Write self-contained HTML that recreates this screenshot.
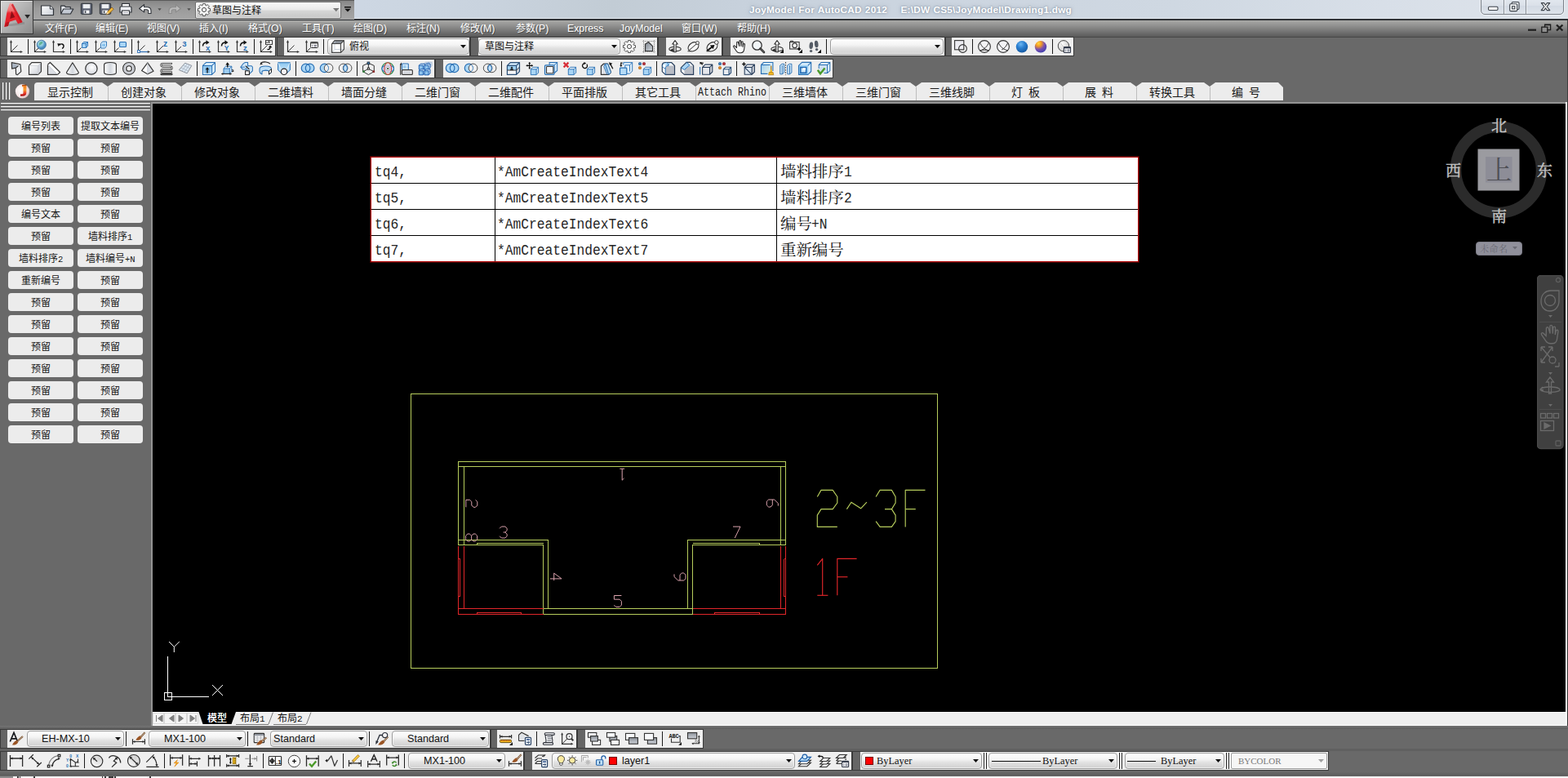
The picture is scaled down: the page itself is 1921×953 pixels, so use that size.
<!DOCTYPE html>
<html lang="zh"><head><meta charset="utf-8"><title>JoyModel For AutoCAD 2012</title>
<style>
html,body{margin:0;padding:0;background:#696969;}
body{width:1921px;height:953px;overflow:hidden;font-family:"Liberation Sans",sans-serif;}
#app{position:relative;width:1921px;height:953px;overflow:hidden;background:#696969;}
#app div,#app svg.t,#app svg.a,#app span{position:absolute;box-sizing:border-box;}
svg.t{overflow:visible;pointer-events:none}
span.h{color:transparent;white-space:nowrap;overflow:hidden;line-height:1.2;height:1.2em;user-select:none}
svg.ic{position:absolute;overflow:visible}
.cs{font-family:"Liberation Sans","Noto Sans CJK SC",sans-serif}
.cr{font-family:"Liberation Serif","Noto Serif CJK SC",serif}
</style></head>
<body>
<div id="app">
<div style="left:0px;top:0px;width:1921px;height:23px;background:linear-gradient(100deg,#ccd6e2 0%,#cdd7e3 23%,#c9d3de 31%,#c2ccd5 39%,#c7d1dc 47%,#ccd5e0 60%,#cfd8e2 75%,#d8dfe8 88%,#dde3ea 100%)"></div>
<div style="left:0px;top:22px;width:1921px;height:1px;background:#e3e9f0"></div>
<div style="left:0px;top:23px;width:1921px;height:2px;background:#2f3236"></div>
<div style="left:41px;top:0px;width:393px;height:24px;background:linear-gradient(#878787,#9a9a9a 40%,#a6a6a6);border-top:1px solid #5a5a5a"></div>
<div style="left:0px;top:0px;width:41px;height:42px;background:#3a3a3a;z-index:5"></div>
<div style="left:1px;top:1px;width:39px;height:40px;background:linear-gradient(135deg,#d2d2d2 0%,#b4b4b4 45%,#8e8e8e 100%);border:1px solid #e4e4e4;border-right-color:#9a9a9a;border-bottom-color:#8a8a8a;z-index:5"></div>
<div style="left:918px;top:5.300px;width:420px;height:18px;font-size:11.800px;font-weight:bold;color:#fff;white-space:pre;text-shadow:0 0 2px rgba(110,125,145,.9),0 0 5px rgba(120,135,155,.55);letter-spacing:0.230px;word-spacing:0.600px">JoyModel For AutoCAD 2012    E:\DW CS5\JoyModel\Drawing1.dwg</div>
<div style="left:1814px;top:-4px;width:102px;height:22px;border:1px solid #7a8088;border-radius:0 0 5px 5px;background:linear-gradient(#e4e9f0,#dbe1e9 48%,#d3dae4 52%,#dde3ea);box-shadow:0 0 0 1px rgba(255,255,255,.55)"></div>
<div style="left:1842px;top:0px;width:1px;height:17px;background:#8a9098;box-shadow:1px 0 0 rgba(255,255,255,.5)"></div>
<div style="left:1869px;top:0px;width:1px;height:17px;background:#8a9098;box-shadow:1px 0 0 rgba(255,255,255,.5)"></div>
<svg class="a" style="left:1815px;top:0" width="100" height="18" viewBox="0 0 100 18"><rect x="8.500" y="8.200" width="11.500" height="4.300" rx="1.200" fill="#fff" stroke="#3c424a" stroke-width="1.100"/><rect x="37.200" y="2.500" width="8.800" height="9" rx="1.200" fill="#e9edf2" stroke="#3c424a" stroke-width="1.100"/><rect x="34.700" y="4.800" width="9" height="8.800" rx="1.200" fill="#f6f8fa" stroke="#3c424a" stroke-width="1.100"/><rect x="37.600" y="7.700" width="3.200" height="3.200" fill="none" stroke="#3c424a" stroke-width="1.100"/><path d="M73.300 3.600h3.300l1.900 2.700 1.900-2.700h3.300l-3.600 4.500 3.700 4.500h-3.400l-1.900-2.700-1.900 2.700h-3.400l3.700-4.500z" fill="#fff" stroke="#3c424a" stroke-width="1.100" stroke-linejoin="round"/></svg>
<div style="left:0px;top:25px;width:1921px;height:20px;background:linear-gradient(#a9a9a7 0%,#8f8f8e 35%,#6e6e6e 75%,#5a5a5a 100%)"></div>
<div style="left:0px;top:45px;width:1921px;height:1px;background:#474747"></div>
<svg class="t" style="left:54.60px;top:27.60px" width="42.7" height="16.8" ><text class="cs" x="1.00" y="12.00" font-size="12.00" fill="rgba(40,40,40,.55)">文件</text><text x="25.00" y="12.00" font-family="Liberation Sans" font-size="12.30" fill="rgba(40,40,40,.55)">(F)</text></svg>
<svg class="t" style="left:54.00px;top:27.00px" width="42.7" height="16.8" ><text class="cs" x="1.00" y="12.00" font-size="12.00" fill="#fff">文件</text><text x="25.00" y="12.00" font-family="Liberation Sans" font-size="12.30" fill="#fff">(F)</text></svg><span class="h" style="left:55.0px;top:27.0px;width:39.7px;font-size:12.0px">文件(F)</span>
<svg class="t" style="left:116.60px;top:27.60px" width="43.4" height="16.8" ><text class="cs" x="1.00" y="12.00" font-size="12.00" fill="rgba(40,40,40,.55)">编辑</text><text x="25.00" y="12.00" font-family="Liberation Sans" font-size="12.30" fill="rgba(40,40,40,.55)">(E)</text></svg>
<svg class="t" style="left:116.00px;top:27.00px" width="43.4" height="16.8" ><text class="cs" x="1.00" y="12.00" font-size="12.00" fill="#fff">编辑</text><text x="25.00" y="12.00" font-family="Liberation Sans" font-size="12.30" fill="#fff">(E)</text></svg><span class="h" style="left:117.0px;top:27.0px;width:40.4px;font-size:12.0px">编辑(E)</span>
<svg class="t" style="left:179.60px;top:27.60px" width="43.4" height="16.8" ><text class="cs" x="1.00" y="12.00" font-size="12.00" fill="rgba(40,40,40,.55)">视图</text><text x="25.00" y="12.00" font-family="Liberation Sans" font-size="12.30" fill="rgba(40,40,40,.55)">(V)</text></svg>
<svg class="t" style="left:179.00px;top:27.00px" width="43.4" height="16.8" ><text class="cs" x="1.00" y="12.00" font-size="12.00" fill="#fff">视图</text><text x="25.00" y="12.00" font-family="Liberation Sans" font-size="12.30" fill="#fff">(V)</text></svg><span class="h" style="left:180.0px;top:27.0px;width:40.4px;font-size:12.0px">视图(V)</span>
<svg class="t" style="left:243.60px;top:27.60px" width="38.6" height="16.8" ><text class="cs" x="1.00" y="12.00" font-size="12.00" fill="rgba(40,40,40,.55)">插入</text><text x="25.00" y="12.00" font-family="Liberation Sans" font-size="12.30" fill="rgba(40,40,40,.55)">(I)</text></svg>
<svg class="t" style="left:243.00px;top:27.00px" width="38.6" height="16.8" ><text class="cs" x="1.00" y="12.00" font-size="12.00" fill="#fff">插入</text><text x="25.00" y="12.00" font-family="Liberation Sans" font-size="12.30" fill="#fff">(I)</text></svg><span class="h" style="left:244.0px;top:27.0px;width:35.6px;font-size:12.0px">插入(I)</span>
<svg class="t" style="left:303.60px;top:27.60px" width="44.8" height="16.8" ><text class="cs" x="1.00" y="12.00" font-size="12.00" fill="rgba(40,40,40,.55)">格式</text><text x="25.00" y="12.00" font-family="Liberation Sans" font-size="12.30" fill="rgba(40,40,40,.55)">(O)</text></svg>
<svg class="t" style="left:303.00px;top:27.00px" width="44.8" height="16.8" ><text class="cs" x="1.00" y="12.00" font-size="12.00" fill="#fff">格式</text><text x="25.00" y="12.00" font-family="Liberation Sans" font-size="12.30" fill="#fff">(O)</text></svg><span class="h" style="left:304.0px;top:27.0px;width:41.8px;font-size:12.0px">格式(O)</span>
<svg class="t" style="left:369.60px;top:27.60px" width="42.7" height="16.8" ><text class="cs" x="1.00" y="12.00" font-size="12.00" fill="rgba(40,40,40,.55)">工具</text><text x="25.00" y="12.00" font-family="Liberation Sans" font-size="12.30" fill="rgba(40,40,40,.55)">(T)</text></svg>
<svg class="t" style="left:369.00px;top:27.00px" width="42.7" height="16.8" ><text class="cs" x="1.00" y="12.00" font-size="12.00" fill="#fff">工具</text><text x="25.00" y="12.00" font-family="Liberation Sans" font-size="12.30" fill="#fff">(T)</text></svg><span class="h" style="left:370.0px;top:27.0px;width:39.7px;font-size:12.0px">工具(T)</span>
<svg class="t" style="left:432.60px;top:27.60px" width="44.1" height="16.8" ><text class="cs" x="1.00" y="12.00" font-size="12.00" fill="rgba(40,40,40,.55)">绘图</text><text x="25.00" y="12.00" font-family="Liberation Sans" font-size="12.30" fill="rgba(40,40,40,.55)">(D)</text></svg>
<svg class="t" style="left:432.00px;top:27.00px" width="44.1" height="16.8" ><text class="cs" x="1.00" y="12.00" font-size="12.00" fill="#fff">绘图</text><text x="25.00" y="12.00" font-family="Liberation Sans" font-size="12.30" fill="#fff">(D)</text></svg><span class="h" style="left:433.0px;top:27.0px;width:41.1px;font-size:12.0px">绘图(D)</span>
<svg class="t" style="left:497.60px;top:27.60px" width="44.1" height="16.8" ><text class="cs" x="1.00" y="12.00" font-size="12.00" fill="rgba(40,40,40,.55)">标注</text><text x="25.00" y="12.00" font-family="Liberation Sans" font-size="12.30" fill="rgba(40,40,40,.55)">(N)</text></svg>
<svg class="t" style="left:497.00px;top:27.00px" width="44.1" height="16.8" ><text class="cs" x="1.00" y="12.00" font-size="12.00" fill="#fff">标注</text><text x="25.00" y="12.00" font-family="Liberation Sans" font-size="12.30" fill="#fff">(N)</text></svg><span class="h" style="left:498.0px;top:27.0px;width:41.1px;font-size:12.0px">标注(N)</span>
<svg class="t" style="left:563.60px;top:27.60px" width="45.4" height="16.8" ><text class="cs" x="1.00" y="12.00" font-size="12.00" fill="rgba(40,40,40,.55)">修改</text><text x="25.00" y="12.00" font-family="Liberation Sans" font-size="12.30" fill="rgba(40,40,40,.55)">(M)</text></svg>
<svg class="t" style="left:563.00px;top:27.00px" width="45.4" height="16.8" ><text class="cs" x="1.00" y="12.00" font-size="12.00" fill="#fff">修改</text><text x="25.00" y="12.00" font-family="Liberation Sans" font-size="12.30" fill="#fff">(M)</text></svg><span class="h" style="left:564.0px;top:27.0px;width:42.4px;font-size:12.0px">修改(M)</span>
<svg class="t" style="left:631.60px;top:27.60px" width="43.4" height="16.8" ><text class="cs" x="1.00" y="12.00" font-size="12.00" fill="rgba(40,40,40,.55)">参数</text><text x="25.00" y="12.00" font-family="Liberation Sans" font-size="12.30" fill="rgba(40,40,40,.55)">(P)</text></svg>
<svg class="t" style="left:631.00px;top:27.00px" width="43.4" height="16.8" ><text class="cs" x="1.00" y="12.00" font-size="12.00" fill="#fff">参数</text><text x="25.00" y="12.00" font-family="Liberation Sans" font-size="12.30" fill="#fff">(P)</text></svg><span class="h" style="left:632.0px;top:27.0px;width:40.4px;font-size:12.0px">参数(P)</span>
<svg class="t" style="left:694.60px;top:27.60px" width="47.4" height="16.8" ><text x="1.00" y="12.00" font-family="Liberation Sans" font-size="12.30" fill="rgba(40,40,40,.55)">Express</text></svg>
<svg class="t" style="left:694.00px;top:27.00px" width="47.4" height="16.8" ><text x="1.00" y="12.00" font-family="Liberation Sans" font-size="12.30" fill="#fff">Express</text></svg>
<svg class="t" style="left:758.60px;top:27.60px" width="55.6" height="16.8" ><text x="1.00" y="12.00" font-family="Liberation Sans" font-size="12.30" fill="rgba(40,40,40,.55)">JoyModel</text></svg>
<svg class="t" style="left:758.00px;top:27.00px" width="55.6" height="16.8" ><text x="1.00" y="12.00" font-family="Liberation Sans" font-size="12.30" fill="#fff">JoyModel</text></svg>
<svg class="t" style="left:834.60px;top:27.60px" width="46.8" height="16.8" ><text class="cs" x="1.00" y="12.00" font-size="12.00" fill="rgba(40,40,40,.55)">窗口</text><text x="25.00" y="12.00" font-family="Liberation Sans" font-size="12.30" fill="rgba(40,40,40,.55)">(W)</text></svg>
<svg class="t" style="left:834.00px;top:27.00px" width="46.8" height="16.8" ><text class="cs" x="1.00" y="12.00" font-size="12.00" fill="#fff">窗口</text><text x="25.00" y="12.00" font-family="Liberation Sans" font-size="12.30" fill="#fff">(W)</text></svg><span class="h" style="left:835.0px;top:27.0px;width:43.8px;font-size:12.0px">窗口(W)</span>
<svg class="t" style="left:902.60px;top:27.60px" width="44.1" height="16.8" ><text class="cs" x="1.00" y="12.00" font-size="12.00" fill="rgba(40,40,40,.55)">帮助</text><text x="25.00" y="12.00" font-family="Liberation Sans" font-size="12.30" fill="rgba(40,40,40,.55)">(H)</text></svg>
<svg class="t" style="left:902.00px;top:27.00px" width="44.1" height="16.8" ><text class="cs" x="1.00" y="12.00" font-size="12.00" fill="#fff">帮助</text><text x="25.00" y="12.00" font-family="Liberation Sans" font-size="12.30" fill="#fff">(H)</text></svg><span class="h" style="left:903.0px;top:27.0px;width:41.1px;font-size:12.0px">帮助(H)</span>
<div style="left:1920px;top:25px;width:1px;height:100px;background:#3c3c3c"></div>
<svg class="a" style="left:1868px;top:26px" width="50" height="18" viewBox="0 0 50 18"><rect x="4" y="9.600" width="10" height="2.200" fill="#1e1e1e"/><path d="M24.600 4.200h7v6.400h-7z" fill="none" stroke="#1e1e1e" stroke-width="1.300"/><path d="M24.200 3.800h7.800v1.400h-7.800z" fill="#1e1e1e"/><path d="M20.800 7.200h7v6.400h-7z" fill="#8f8f8f" stroke="#1e1e1e" stroke-width="1.300"/><path d="M39 4.500l7.400 7M46.400 4.500l-7.400 7" stroke="#1e1e1e" stroke-width="2.300"/></svg>
<div style="left:0px;top:45px;width:338px;height:24px;background:#656565;border:1px solid #3a3a3a"></div><div style="left:9px;top:46px;width:328px;height:22px;background:#efefef"></div><svg class="ic" style="left:12px;top:49px" width="16" height="16" viewBox="0 0 16 16"><path d="M1.5 1.5v13h13" fill="none" stroke="#363636" stroke-width="1.2" /><path d="M0 3.200L1.500 0 3 3.200z M12.800 13L16 14.500 12.800 16z" fill="#363636" /><path d="M1.5 14.5L9.5 6.5" fill="none" stroke="#363636" stroke-width="1" /></svg><div style="left:34px;top:48px;width:1.4px;height:18px;background:#1c1c1c"></div><svg class="ic" style="left:41px;top:49px" width="16" height="16" viewBox="0 0 16 16"><path d="M1.5 1.5v13h13" fill="none" stroke="#363636" stroke-width="1.2" /><path d="M0 3.200L1.500 0 3 3.200z M12.800 13L16 14.500 12.800 16z" fill="#363636" /><path d="M1.5 14.5L6.5 9.5" fill="none" stroke="#363636" stroke-width="1" /><defs><radialGradient id="glb" cx="40%" cy="35%"><stop offset="0" stop-color="#d4f0f0"/><stop offset="0.6" stop-color="#86c4dc"/><stop offset="1" stop-color="#4a8cc0"/></radialGradient></defs><circle cx="9.800" cy="5.800" r="5.600" fill="url(#glb)" stroke="#3b6f9c" stroke-width="0.8"/><path d="M8 2.500c1.500-1 3-0.500 3.500 0.500-1 0.500-0.500 2-2 2.500-1 0.200-1.500 1.500-2.500 1-0.500-1.500 0-3 1-4z" fill="#4aa880" opacity="0.8"/></svg><svg class="ic" style="left:64px;top:49px" width="16" height="16" viewBox="0 0 16 16"><path d="M1.5 1.5v13h13" fill="none" stroke="#363636" stroke-width="1.2" /><path d="M0 3.200L1.500 0 3 3.200z M12.800 13L16 14.500 12.800 16z" fill="#363636" /><path d="M8.800 6.300c1.500-2.500 5.500-1.500 5.200 1.500-0.200 1.500-1 2.300-2 2.600" fill="none" stroke="#111" stroke-width="1.4" /><path d="M6.300 4.200l3.800 0.300-2.600 3.500z" fill="#111" /></svg><div style="left:86px;top:48px;width:1.4px;height:18px;background:#1c1c1c"></div><svg class="ic" style="left:93px;top:49px" width="16" height="16" viewBox="0 0 16 16"><path d="M1.5 1.5v13h13" fill="none" stroke="#363636" stroke-width="1.2" /><path d="M0 3.200L1.500 0 3 3.200z M12.800 13L16 14.500 12.800 16z" fill="#363636" /><path d="M1.5 14.5L6.5 9.5" fill="none" stroke="#363636" stroke-width="1" /><path d="M7.500 4.500h5v5h-5z M7.500 4.500l2-2h5v5l-2 2 M12.500 4.500l2-2" fill="#a9d5f5" stroke="#2a70b4" stroke-width="0.935" /></svg><svg class="ic" style="left:116px;top:49px" width="16" height="16" viewBox="0 0 16 16"><path d="M1.5 1.5v13h13" fill="none" stroke="#363636" stroke-width="1.2" /><path d="M0 3.200L1.500 0 3 3.200z M12.800 13L16 14.500 12.800 16z" fill="#363636" /><path d="M1.5 14.5L6.5 9.5" fill="none" stroke="#363636" stroke-width="1" /><path d="M7.500 4.500l2-2.500h5v5.500l-2 2.500h-5z" fill="#d4eafa" stroke="#2a70b4" stroke-width="0.935" /><rect x="9" y="4.500" width="4" height="3.500" fill="#8cc4ee"/></svg><svg class="ic" style="left:139px;top:49px" width="16" height="16" viewBox="0 0 16 16"><path d="M1.5 1.5v13h13" fill="none" stroke="#363636" stroke-width="1.2" /><path d="M0 3.200L1.500 0 3 3.200z M12.800 13L16 14.500 12.800 16z" fill="#363636" /><path d="M1.5 14.5L6.5 9.5" fill="none" stroke="#363636" stroke-width="1" /><rect x="7.500" y="2.500" width="8" height="6" rx="1" fill="#a9d5f5" stroke="#2a70b4" stroke-width="1.1"/></svg><div style="left:161px;top:48px;width:1.4px;height:18px;background:#1c1c1c"></div><svg class="ic" style="left:168px;top:49px" width="16" height="16" viewBox="0 0 16 16"><path d="M1.500 1.500v13" fill="none" stroke="#363636" stroke-width="1.2" /><path d="M1.500 14.500h13" fill="none" stroke="#2f6fb5" stroke-width="1.2" /><path d="M0 3.200L1.500 0 3 3.200z M12.800 13L16 14.500 12.800 16z" fill="#363636" /><path d="M2.500 13.500L9.500 6.500" fill="none" stroke="#363636" stroke-width="1" /><rect x="0.600" y="12.600" width="2.800" height="2.800" fill="#fff" stroke="#2f6fb5" stroke-width="1"/></svg><svg class="ic" style="left:191px;top:49px" width="16" height="16" viewBox="0 0 16 16"><path d="M1.5 1.5v13h13" fill="none" stroke="#363636" stroke-width="1.2" /><path d="M0 3.200L1.500 0 3 3.200z M12.800 13L16 14.500 12.800 16z" fill="#363636" /><path d="M1.500 14.500L9 7" fill="none" stroke="#363636" stroke-width="1" /><text x="9" y="7.5" font-family="Liberation Sans" font-size="10.5" font-weight="bold" fill="#2a70b4">z</text></svg><svg class="ic" style="left:214px;top:49px" width="16" height="16" viewBox="0 0 16 16"><path d="M1.5 1.5v13h13" fill="none" stroke="#363636" stroke-width="1.2" /><path d="M0 3.200L1.500 0 3 3.200z M12.800 13L16 14.500 12.800 16z" fill="#363636" /><path d="M1.500 14.500L8 8" fill="none" stroke="#363636" stroke-width="1" /><text x="9.2" y="8" font-family="Liberation Sans" font-size="9.5" font-weight="bold" fill="#2a70b4">3</text></svg><div style="left:236px;top:48px;width:1.4px;height:18px;background:#1c1c1c"></div><svg class="ic" style="left:243px;top:49px" width="16" height="16" viewBox="0 0 16 16"><path d="M1.5 1.5v13h13" fill="none" stroke="#363636" stroke-width="1.2" /><path d="M0 3.200L1.500 0 3 3.200z M12.800 13L16 14.500 12.800 16z" fill="#363636" /><path d="M5.500 7.500c0-3 2-4.500 5-4.500" fill="none" stroke="#111" stroke-width="1.5" /><path d="M9.500 0.300l4 2.700-4 2.700z" fill="#111" /><text x="9" y="12.800" font-family="Liberation Sans" font-size="9.5" font-weight="bold" fill="#2a70b4">x</text></svg><svg class="ic" style="left:266px;top:49px" width="16" height="16" viewBox="0 0 16 16"><path d="M1.5 1.5v13h13" fill="none" stroke="#363636" stroke-width="1.2" /><path d="M0 3.200L1.500 0 3 3.200z M12.800 13L16 14.500 12.800 16z" fill="#363636" /><path d="M5.500 7.500c0-3 2-4.500 5-4.500" fill="none" stroke="#111" stroke-width="1.5" /><path d="M9.500 0.300l4 2.700-4 2.700z" fill="#111" /><text x="8.8" y="12.800" font-family="Liberation Sans" font-size="8.5" font-weight="bold" fill="#2a70b4">Y</text></svg><svg class="ic" style="left:289px;top:49px" width="16" height="16" viewBox="0 0 16 16"><path d="M1.5 1.5v13h13" fill="none" stroke="#363636" stroke-width="1.2" /><path d="M0 3.200L1.500 0 3 3.200z M12.800 13L16 14.500 12.800 16z" fill="#363636" /><path d="M5.500 7.500c0-3 2-4.500 5-4.500" fill="none" stroke="#111" stroke-width="1.5" /><path d="M9.500 0.300l4 2.700-4 2.700z" fill="#111" /><text x="9" y="12.800" font-family="Liberation Sans" font-size="9.5" font-weight="bold" fill="#2a70b4">z</text></svg><div style="left:311px;top:48px;width:1.4px;height:18px;background:#1c1c1c"></div><svg class="ic" style="left:318px;top:49px" width="16" height="16" viewBox="0 0 16 16"><path d="M1.5 1.5v13h13" fill="none" stroke="#363636" stroke-width="1.2" /><path d="M0 3.200L1.500 0 3 3.200z M12.800 13L16 14.500 12.800 16z" fill="#363636" /><path d="M1.500 14.500L9.500 6.500" fill="none" stroke="#363636" stroke-width="1" /><rect x="7.500" y="0.600" width="8" height="4.800" fill="#fff" stroke="#363636" stroke-width="1"/><path d="M7.500 3h5.500 M11.500 0.600v2.400" fill="none" stroke="#363636" stroke-width="1" /><path d="M9.500 11.500c2 0.500 3.500-0.500 3.500-2.500" fill="none" stroke="#111" stroke-width="1.4" /><path d="M10.800 9.300l2.300-2.800 2.300 2.800z" fill="#111" /></svg>
<div style="left:339px;top:45px;width:237px;height:24px;background:#656565;border:1px solid #3a3a3a"></div><div style="left:348px;top:46px;width:227px;height:22px;background:#efefef"></div><svg class="ic" style="left:351px;top:49px" width="16" height="16" viewBox="0 0 16 16"><path d="M1.5 1.5v13h13" fill="none" stroke="#363636" stroke-width="1.2" /><path d="M0 3.200L1.500 0 3 3.200z M12.800 13L16 14.500 12.800 16z" fill="#363636" /><path d="M1.5 14.5L9.5 6.5" fill="none" stroke="#363636" stroke-width="1" /></svg><svg class="ic" style="left:374px;top:49px" width="16" height="16" viewBox="0 0 16 16"><path d="M1.5 1.5v13h13" fill="none" stroke="#363636" stroke-width="1.2" /><path d="M0 3.200L1.500 0 3 3.200z M12.800 13L16 14.500 12.800 16z" fill="#363636" /><path d="M1.5 14.5L6.5 9.5" fill="none" stroke="#363636" stroke-width="1" /><rect x="6.500" y="2.500" width="9" height="7" rx="1" fill="#f4f4f4" stroke="#363636" stroke-width="1"/><path d="M6.500 2.500h9v2h-9z" fill="#555" /><path d="M8 6.500h1 M10.500 6.500h3.500 M8 8h1 M10.500 8h3.500" fill="none" stroke="#667" stroke-width="0.9" /></svg><div style="left:396px;top:48px;width:1.4px;height:18px;background:#1c1c1c"></div><div style="left:401px;top:47px;width:174px;height:20px;background:linear-gradient(#ffffff 0%,#f3f3f3 40%,#e2e2e2 60%,#d0d0d0 100%);border:1px solid #9c9c9c;border-radius:4px;box-shadow:inset 0 0 0 1px rgba(255,255,255,.6)"></div><svg class="ic" style="left:406px;top:49px" width="16" height="16" viewBox="0 0 16 16"><path d="M0.600 4.500L4 0.600h11.400L11.500 4.500z" fill="#8a9098" /><path d="M11.500 4.500L15.400 0.600v10.900L11.500 15.400z" fill="#fbfbfb" /><rect x="0.600" y="4.500" width="10.900" height="10.900" fill="#fff"/><path d="M4 0.600v10.900h11.400 M4 11.500L0.600 15.400" fill="none" stroke="#c3ccd6" stroke-width="0.9" /><path d="M0.600 4.500L4 0.600h11.400v10.900L11.500 15.400h-10.900z M0.600 4.500h10.900v10.900 M11.500 4.500L15.400 0.600" fill="none" stroke="#444" stroke-width="1.1" /></svg><svg class="a" style="left:564px;top:55px" width="7" height="4" viewBox="0 0 7 4"><path d="M0 0h7L3.5 4z" fill="#111"/></svg><svg class="t" style="left:426.50px;top:48.60px" width="27.0" height="16.8" ><text class="cs" x="1.00" y="12.00" font-size="12.00" fill="#111">俯视</text></svg><span class="h" style="left:427.5px;top:48.6px;width:24.0px;font-size:12.0px">俯视</span>
<div style="left:576px;top:45px;width:230px;height:24px;background:#656565;border:1px solid #3a3a3a"></div><div style="left:586px;top:46px;width:219px;height:22px;background:#efefef"></div><div style="left:586px;top:47px;width:174px;height:20px;background:linear-gradient(#ffffff 0%,#f3f3f3 40%,#e2e2e2 60%,#d0d0d0 100%);border:1px solid #9c9c9c;border-radius:4px;box-shadow:inset 0 0 0 1px rgba(255,255,255,.6)"></div><svg class="a" style="left:749px;top:55px" width="7" height="4" viewBox="0 0 7 4"><path d="M0 0h7L3.5 4z" fill="#111"/></svg><svg class="t" style="left:593.00px;top:48.60px" width="63.0" height="16.8" ><text class="cs" x="1.00" y="12.00" font-size="12.00" fill="#111">草图与注释</text></svg><span class="h" style="left:594.0px;top:48.6px;width:60.0px;font-size:12.0px">草图与注释</span><svg class="ic" style="left:763px;top:49px" width="16" height="16" viewBox="0 0 16 16"><path d="M13.29 6.17 L15.45 6.52 L15.45 9.48 L13.29 9.83 L13.04 10.44 L14.32 12.22 L12.22 14.32 L10.44 13.04 L9.83 13.29 L9.48 15.45 L6.52 15.45 L6.17 13.29 L5.56 13.04 L3.78 14.32 L1.68 12.22 L2.96 10.44 L2.71 9.83 L0.55 9.48 L0.55 6.52 L2.71 6.17 L2.96 5.56 L1.68 3.78 L3.78 1.68 L5.56 2.96 L6.17 2.71 L6.52 0.55 L9.48 0.55 L9.83 2.71 L10.44 2.96 L12.22 1.68 L14.32 3.78 L13.04 5.56Z" fill="#fdfdfd" stroke="#444" stroke-width="0.95" stroke-linejoin="round"/><circle cx="8" cy="8" r="2.600" fill="#efefef" stroke="#444" stroke-width="0.95"/></svg><svg class="ic" style="left:787px;top:49px" width="16" height="16" viewBox="0 0 16 16"><path d="M0.500 1.500h15 M0.500 14.500h15 M1.500 0.500v15 M14.500 0.500v15" fill="none" stroke="#777" stroke-width="1" stroke-dasharray="1.2 1.2"/><defs><linearGradient id="wsg" x1="0" y1="0" x2="1" y2="1"><stop offset="0" stop-color="#7d848e"/><stop offset="1" stop-color="#d5dae0"/></linearGradient></defs><path d="M3.500 13.500V5L7.500 2.500 12.500 7.500V13.500z" fill="url(#wsg)" stroke="#333" stroke-width="1.2" /></svg>
<div style="left:806px;top:45px;width:79px;height:24px;background:#656565;border:1px solid #3a3a3a"></div><div style="left:816px;top:46px;width:68px;height:22px;background:#efefef"></div><svg class="ic" style="left:819px;top:49px" width="16" height="16" viewBox="0 0 16 16"><path d="M6.500 8.300C3 8.800 0.800 9.800 0.800 11c0 1.500 3.200 2.600 7.200 2.600s7.200-1.100 7.200-2.600c0-1.200-2.200-2.200-5.700-2.700" fill="none" stroke="#2b2b2b" stroke-width="1.1" /><path d="M8 0.600L4.800 5h2v9.800h2.400V5h2z" fill="#fff" stroke="#2b2b2b" stroke-width="1.1" stroke-linejoin="round"/><path d="M1.500 12.600l4.300-2.600v5z" fill="#2b2b2b" /></svg><svg class="ic" style="left:842px;top:49px" width="16" height="16" viewBox="0 0 16 16"><ellipse cx="7.500" cy="8.300" rx="7" ry="5" transform="rotate(-32 7.500 8.300)" fill="#f8f8f8" stroke="#333" stroke-width="1.100"/><path d="M2 12.800L12 4.200" fill="none" stroke="#363636" stroke-width="1" /><circle cx="12.500" cy="3.500" r="1.900" fill="#fff" stroke="#333" stroke-width="1"/><path d="M0.500 13.800h3.500" fill="none" stroke="#363636" stroke-width="1" /></svg><svg class="ic" style="left:865px;top:49px" width="16" height="16" viewBox="0 0 16 16"><ellipse cx="7.500" cy="8.300" rx="7" ry="5" transform="rotate(-32 7.500 8.300)" fill="#f8f8f8" stroke="#333" stroke-width="1.100"/><circle cx="12.800" cy="3" r="2.300" fill="#fff" stroke="#333" stroke-width="1"/><path d="M1 13.500L8 8" fill="none" stroke="#111" stroke-width="2" /><path d="M4.800 6.500l5.700-0.500-1.800 5.300z" fill="#111" /><path d="M0.500 13.800h3.500" fill="none" stroke="#363636" stroke-width="1" /></svg>
<div style="left:885px;top:45px;width:273px;height:24px;background:#656565;border:1px solid #3a3a3a"></div><div style="left:895px;top:46px;width:262px;height:22px;background:#efefef"></div><svg class="ic" style="left:898px;top:49px" width="16" height="16" viewBox="0 0 16 16"><path d="M4.500 9.500L2.300 7.300c-1-1-2.300 0-1.500 1.200L4.500 14c0.800 1.200 2 1.700 3.500 1.700h1.500c2.500 0 3.700-1.500 4-3.500l1-6.500c0.200-1.300-1.500-1.600-1.800-0.300L12 8.500 12.200 2.800c0-1.300-1.800-1.400-1.900 0L10 7.500 9.600 1.600c-0.100-1.300-1.900-1.300-1.900 0L7.800 7.500 6.500 3c-0.300-1.300-2.100-0.900-1.800 0.400z" fill="#fdfdfd" stroke="#2b2b2b" stroke-width="1.1" stroke-linejoin="round"/></svg><svg class="ic" style="left:921px;top:49px" width="16" height="16" viewBox="0 0 16 16"><circle cx="6.500" cy="6.500" r="5.700" fill="#f2f6f8" stroke="#333" stroke-width="1.300"/><path d="M10.500 10.500L15 15" fill="none" stroke="#333" stroke-width="2.600" stroke-linecap="round"/><path d="M10.500 10.500L15 15" fill="none" stroke="#777" stroke-width="0.8" /></svg><svg class="ic" style="left:944px;top:49px" width="16" height="16" viewBox="0 0 16 16"><path d="M6.500 8.300C3 8.800 0.800 9.800 0.800 11c0 1.500 3.200 2.600 7.200 2.600s7.200-1.100 7.200-2.600c0-1.200-2.200-2.200-5.700-2.700" fill="none" stroke="#2b2b2b" stroke-width="1.1" /><path d="M8 0.600L4.800 5h2v9.800h2.400V5h2z" fill="#fff" stroke="#2b2b2b" stroke-width="1.1" stroke-linejoin="round"/><path d="M1.500 12.600l4.300-2.600v5z" fill="#2b2b2b" /><path d="M16 11.500V16h-4.500z" fill="#111" /></svg><svg class="ic" style="left:967px;top:49px" width="16" height="16" viewBox="0 0 16 16"><rect x="0.600" y="2.500" width="11.500" height="8.500" fill="#f7f7f7" stroke="#333" stroke-width="1.100"/><path d="M1.500 2.500V1.200h3V2.500" fill="none" stroke="#363636" stroke-width="1" /><circle cx="6.600" cy="6.700" r="2.800" fill="#fff" stroke="#333" stroke-width="1.100"/><path d="M12 8.500l1 1.500 1.500 1-1.500 1-1 1.500-1-1.500-1.500-1 1.500-1z" fill="#111" /><path d="M16 11.500V16h-4.500z" fill="#111" /></svg><svg class="ic" style="left:990px;top:49px" width="16" height="16" viewBox="0 0 16 16"><ellipse cx="3.800" cy="6.800" rx="2.300" ry="4.300" transform="rotate(6 3.800 6.800)" fill="#555c66"/><ellipse cx="3.600" cy="13.500" rx="1.700" ry="1.600" fill="#555c66"/><ellipse cx="10.200" cy="5" rx="2.300" ry="4.300" transform="rotate(-6 10.200 5)" fill="#555c66"/><ellipse cx="10.600" cy="11.600" rx="1.700" ry="1.600" fill="#555c66"/><path d="M16 11.500V16h-4.500z" fill="#111" /></svg><div style="left:1012px;top:48px;width:1.4px;height:18px;background:#1c1c1c"></div><div style="left:1017px;top:47px;width:139px;height:20px;background:linear-gradient(#ffffff 0%,#f3f3f3 40%,#e2e2e2 60%,#d0d0d0 100%);border:1px solid #9c9c9c;border-radius:4px;box-shadow:inset 0 0 0 1px rgba(255,255,255,.6)"></div><svg class="a" style="left:1145px;top:55px" width="7" height="4" viewBox="0 0 7 4"><path d="M0 0h7L3.5 4z" fill="#111"/></svg>
<div style="left:1158px;top:45px;width:158px;height:24px;background:#656565;border:1px solid #3a3a3a"></div><div style="left:1166px;top:46px;width:149px;height:22px;background:#efefef"></div><svg class="ic" style="left:1169px;top:49px" width="16" height="16" viewBox="0 0 16 16"><rect x="0.600" y="0.600" width="11.200" height="11.200" fill="#ededf2" stroke="#333" stroke-width="1.100"/><circle cx="10.500" cy="10.500" r="4.900" fill="none" stroke="#333" stroke-width="1.100"/></svg><div style="left:1191px;top:48px;width:1.4px;height:18px;background:#1c1c1c"></div><svg class="ic" style="left:1198px;top:49px" width="16" height="16" viewBox="0 0 16 16"><circle cx="8" cy="8" r="7.400" fill="#f4f4f6" stroke="#333" stroke-width="1.100"/><path d="M2.500 3c2 5 6 9 11 10 M13.500 3c-2 5-6 9-11 10 M3 13.200c3-1.500 7-1.500 10 0" fill="none" stroke="#333" stroke-width="1" /></svg><svg class="ic" style="left:1221px;top:49px" width="16" height="16" viewBox="0 0 16 16"><circle cx="8" cy="8" r="7.400" fill="#f4f4f6" stroke="#333" stroke-width="1.100"/><path d="M2.300 3.300c2 5 6 8.500 11.500 9.500 M13.700 3.300c-1.500 4-4 7-7.500 8.700" fill="none" stroke="#333" stroke-width="1" /></svg><svg class="ic" style="left:1244px;top:49px" width="16" height="16" viewBox="0 0 16 16"><defs><radialGradient id="vsr" cx="40%" cy="28%" r="75%"><stop offset="0" stop-color="#6db7f2"/><stop offset="0.45" stop-color="#2a7fd0"/><stop offset="1" stop-color="#1558a0"/></radialGradient></defs><circle cx="8" cy="8.300" r="7.200" fill="url(#vsr)"/></svg><svg class="ic" style="left:1267px;top:49px" width="16" height="16" viewBox="0 0 16 16"><defs><radialGradient id="vsc" cx="32%" cy="22%" r="85%"><stop offset="0" stop-color="#ffd83a"/><stop offset="0.28" stop-color="#f09a28"/><stop offset="0.6" stop-color="#7a4fb0"/><stop offset="1" stop-color="#3a3fae"/></radialGradient></defs><circle cx="8" cy="8.300" r="7.200" fill="url(#vsc)"/></svg><div style="left:1289px;top:48px;width:1.4px;height:18px;background:#1c1c1c"></div><svg class="ic" style="left:1296px;top:49px" width="16" height="16" viewBox="0 0 16 16"><defs><radialGradient id="vsm" cx="35%" cy="30%" r="80%"><stop offset="0" stop-color="#fff"/><stop offset="0.7" stop-color="#d5d5d5"/><stop offset="1" stop-color="#9a9a9a"/></radialGradient></defs><circle cx="7" cy="7.300" r="6.700" fill="url(#vsm)" stroke="#444" stroke-width="1"/><path d="M3 3.500L8 10" fill="none" stroke="#bbb" stroke-width="0.8" /><rect x="7.500" y="8.500" width="8" height="7" rx="0.800" fill="#f6f6f8" stroke="#333a4a" stroke-width="1.100"/><path d="M7.500 8.500h8v1.800h-8z" fill="#333a4a" /><path d="M9 12h1.200 M11.500 12h2.800 M9 13.800h1.200 M11.500 13.800h2.800" fill="none" stroke="#4a5468" stroke-width="0.9" /></svg>
<div style="left:0px;top:72px;width:533px;height:24px;background:#656565;border:1px solid #3a3a3a"></div><div style="left:9px;top:73px;width:523px;height:22px;background:#efefef"></div><svg class="ic" style="left:12px;top:76px" width="16" height="16" viewBox="0 0 16 16"><path d="M2.300 0.600L10.700 4.400 7.300 7.200 2.600 8.100z" fill="#a7b2c0" /><path d="M10.700 4.400L12.900 2.800 13.800 11.600 9.400 15.600 7.600 15 7.300 7.200z" fill="#eef0f4" /><path d="M2.300 0.600L12.900 2.800 13.800 11.600 9.400 15.600 7.600 15 7.300 7.200 2.600 8.100z M7.300 7.200L10.700 4.400" fill="none" stroke="#363636" stroke-width="1.2" stroke-linejoin="round"/></svg><svg class="ic" style="left:35px;top:76px" width="16" height="16" viewBox="0 0 16 16"><defs><linearGradient id="gg" x1="0" y1="0" x2="1" y2="1"><stop offset="0" stop-color="#fff"/><stop offset="1" stop-color="#cfd3da"/></linearGradient><linearGradient id="gh" x1="0" y1="0" x2="1" y2="0"><stop offset="0" stop-color="#fff"/><stop offset="0.5" stop-color="#d4d8de"/><stop offset="1" stop-color="#fff"/></linearGradient><radialGradient id="gs" cx="55%" cy="40%" r="65%"><stop offset="0" stop-color="#fff"/><stop offset="1" stop-color="#d0d3da"/></radialGradient><linearGradient id="bg1" x1="0" y1="0" x2="0" y2="1"><stop offset="0" stop-color="#8ec8f0"/><stop offset="1" stop-color="#d8ecfb"/></linearGradient></defs><path d="M0.500 4.400L3.900 0.600H15.400V11.600L11.700 15.400H0.500z" fill="#fff" /><rect x="0.500" y="4.400" width="11.200" height="11" fill="url(#gg)"/><path d="M11.700 4.400L15.400 0.600V11.600L11.700 15.400z" fill="#d5d8df" /><path d="M0.500 4.400L3.900 0.600H15.400V11.600L11.700 15.400H0.500z" fill="none" stroke="#363636" stroke-width="1.2" stroke-linejoin="round"/><path d="M0.500 4.400h11.200v11 M11.700 4.400L15.400 0.600" fill="none" stroke="#c6cad2" stroke-width="0.8" /></svg><svg class="ic" style="left:58px;top:76px" width="16" height="16" viewBox="0 0 16 16"><path d="M0.500 3.100L3.400 0.500 15.500 12.500 12.500 15.400H0.500z" fill="#fff" /><path d="M0.500 3.100L12.500 15.400H0.500z" fill="#dcdfe5" /><path d="M0.500 3.100L3.400 0.500 15.500 12.500 12.500 15.400H0.500z" fill="none" stroke="#363636" stroke-width="1.2" stroke-linejoin="round"/><path d="M0.500 3.100L12.500 15.400" fill="none" stroke="#bcc1ca" stroke-width="0.8" /></svg><svg class="ic" style="left:81px;top:76px" width="16" height="16" viewBox="0 0 16 16"><defs><linearGradient id="gg" x1="0" y1="0" x2="1" y2="1"><stop offset="0" stop-color="#fff"/><stop offset="1" stop-color="#cfd3da"/></linearGradient><linearGradient id="gh" x1="0" y1="0" x2="1" y2="0"><stop offset="0" stop-color="#fff"/><stop offset="0.5" stop-color="#d4d8de"/><stop offset="1" stop-color="#fff"/></linearGradient><radialGradient id="gs" cx="55%" cy="40%" r="65%"><stop offset="0" stop-color="#fff"/><stop offset="1" stop-color="#d0d3da"/></radialGradient><linearGradient id="bg1" x1="0" y1="0" x2="0" y2="1"><stop offset="0" stop-color="#8ec8f0"/><stop offset="1" stop-color="#d8ecfb"/></linearGradient></defs><path d="M7.900 0.800L0.500 12.800C0.500 14.400 3.500 15.500 7.900 15.500S15.300 14.400 15.300 12.800z" fill="url(#gh)" stroke="#363636" stroke-width="1.2" stroke-linejoin="round"/></svg><svg class="ic" style="left:104px;top:76px" width="16" height="16" viewBox="0 0 16 16"><defs><linearGradient id="gg" x1="0" y1="0" x2="1" y2="1"><stop offset="0" stop-color="#fff"/><stop offset="1" stop-color="#cfd3da"/></linearGradient><linearGradient id="gh" x1="0" y1="0" x2="1" y2="0"><stop offset="0" stop-color="#fff"/><stop offset="0.5" stop-color="#d4d8de"/><stop offset="1" stop-color="#fff"/></linearGradient><radialGradient id="gs" cx="55%" cy="40%" r="65%"><stop offset="0" stop-color="#fff"/><stop offset="1" stop-color="#d0d3da"/></radialGradient><linearGradient id="bg1" x1="0" y1="0" x2="0" y2="1"><stop offset="0" stop-color="#8ec8f0"/><stop offset="1" stop-color="#d8ecfb"/></linearGradient></defs><circle cx="7.900" cy="7.900" r="7.200" fill="url(#gs)" stroke="#363636" stroke-width="1.200"/></svg><svg class="ic" style="left:127px;top:76px" width="16" height="16" viewBox="0 0 16 16"><defs><linearGradient id="gg" x1="0" y1="0" x2="1" y2="1"><stop offset="0" stop-color="#fff"/><stop offset="1" stop-color="#cfd3da"/></linearGradient><linearGradient id="gh" x1="0" y1="0" x2="1" y2="0"><stop offset="0" stop-color="#fff"/><stop offset="0.5" stop-color="#d4d8de"/><stop offset="1" stop-color="#fff"/></linearGradient><radialGradient id="gs" cx="55%" cy="40%" r="65%"><stop offset="0" stop-color="#fff"/><stop offset="1" stop-color="#d0d3da"/></radialGradient><linearGradient id="bg1" x1="0" y1="0" x2="0" y2="1"><stop offset="0" stop-color="#8ec8f0"/><stop offset="1" stop-color="#d8ecfb"/></linearGradient></defs><path d="M0.600 3.200C0.600 1.500 3.800 0.500 8 0.500s7.400 1 7.400 2.700V12.800C15.400 14.500 12.200 15.500 8 15.500S0.600 14.500 0.600 12.800z" fill="url(#gh)" stroke="#363636" stroke-width="1.2" /></svg><svg class="ic" style="left:150px;top:76px" width="16" height="16" viewBox="0 0 16 16"><circle cx="8" cy="7.900" r="7.400" fill="#eceef2" stroke="#363636" stroke-width="1.200"/><circle cx="8" cy="7.900" r="5.600" fill="none" stroke="#9aa0aa" stroke-width="0.800"/><circle cx="8" cy="7.900" r="3.300" fill="#efefef" stroke="#363636" stroke-width="1.300"/></svg><svg class="ic" style="left:173px;top:76px" width="16" height="16" viewBox="0 0 16 16"><path d="M7.800 0.900L0.600 10.600 7.800 14.800z" fill="#fff" /><path d="M7.800 0.900L15 11.200 7.800 14.800z" fill="#dde0e6" /><path d="M7.800 0.900L0.600 10.600 7.800 14.800 15 11.200z" fill="none" stroke="#363636" stroke-width="1.2" stroke-linejoin="round"/><path d="M7.800 0.900V14.800" fill="none" stroke="#c0c5cd" stroke-width="0.8" /></svg><svg class="ic" style="left:196px;top:76px" width="16" height="16" viewBox="0 0 16 16"><path d="M14 1.800H3.500C0.800 1.800 0.800 5.500 3.500 5.500H12.500C15.200 5.500 15.200 9 12.500 9H3.500C0.800 9 0.800 12.500 3.500 12.500H14 M1.500 15h13" fill="none" stroke="#444" stroke-width="2.3" stroke-linecap="round"/><path d="M14 1.800H3.500C0.800 1.800 0.800 5.500 3.500 5.500H12.500C15.200 5.500 15.200 9 12.500 9H3.500C0.800 9 0.800 12.500 3.500 12.500H14" fill="none" stroke="#f6f6f6" stroke-width="0.8" /></svg><svg class="ic" style="left:219px;top:76px" width="16" height="16" viewBox="0 0 16 16"><path d="M7.700 1.200L15.800 4.400 10.200 13.800 0.300 9.700z" fill="#dce8f2" stroke="#8a8f98" stroke-width="1" /><path d="M5.200 4L13.300 7.500 M2.700 6.800L11.300 10.800 M10.400 2.300L3.600 11.100 M13.100 3.400L6.900 12.400" fill="none" stroke="#a9b4c2" stroke-width="0.8" /></svg><div style="left:241px;top:75px;width:1.4px;height:18px;background:#1c1c1c"></div><svg class="ic" style="left:248px;top:76px" width="16" height="16" viewBox="0 0 16 16"><defs><linearGradient id="gg" x1="0" y1="0" x2="1" y2="1"><stop offset="0" stop-color="#fff"/><stop offset="1" stop-color="#cfd3da"/></linearGradient><linearGradient id="gh" x1="0" y1="0" x2="1" y2="0"><stop offset="0" stop-color="#fff"/><stop offset="0.5" stop-color="#d4d8de"/><stop offset="1" stop-color="#fff"/></linearGradient><radialGradient id="gs" cx="55%" cy="40%" r="65%"><stop offset="0" stop-color="#fff"/><stop offset="1" stop-color="#d0d3da"/></radialGradient><linearGradient id="bg1" x1="0" y1="0" x2="0" y2="1"><stop offset="0" stop-color="#8ec8f0"/><stop offset="1" stop-color="#d8ecfb"/></linearGradient></defs><path d="M0.400 4.400L4.400 0.600H15.500V11.600L11.600 15.400H0.400z" fill="#d9edfb" /><rect x="0.400" y="4.400" width="11.200" height="11" fill="url(#bg1)"/><rect x="2.500" y="6.500" width="7" height="7" fill="#7fb9e6"/><path d="M0.400 4.400L4.400 0.600H15.500V11.600L11.600 15.400H0.400z M0.400 4.400h11.200v11 M11.600 4.400L15.500 0.600" fill="none" stroke="#2a70b4" stroke-width="1.02" stroke-linejoin="round"/><path d="M6 13.500V8" fill="none" stroke="#111" stroke-width="1.3" /><path d="M3.800 9.300L6 6.300 8.200 9.300z" fill="#111" /></svg><svg class="ic" style="left:271px;top:76px" width="16" height="16" viewBox="0 0 16 16"><path d="M3 8L5.500 5.200H12.800V11.500L10.300 14.300H3z" fill="#e3f1fc" /><rect x="3" y="8" width="7.300" height="6.300" fill="#9fcdf0"/><path d="M3 8L5.500 5.200H12.800V11.500L10.300 14.300H3z M3 8h7.300v6.300 M10.300 8L12.800 5.200" fill="none" stroke="#2a70b4" stroke-width="0.935" stroke-linejoin="round" stroke-dasharray="none"/><path d="M7.700 6.500V2.500" fill="none" stroke="#111" stroke-width="1.4" /><path d="M5.300 3.600L7.700 0.300 10.100 3.600z" fill="#111" /><path d="M0.500 14.500h12 M13 9.500l2.300 0.700 M13 11.800l2.300-0.700" fill="none" stroke="#222" stroke-width="1.1" /><path d="M0 14.500l2.300-1.400v2.800z M10.500 13.100l2.500 1.400-2.500 1.400z" fill="#222" /></svg><svg class="ic" style="left:294px;top:76px" width="16" height="16" viewBox="0 0 16 16"><path d="M0.800 6.200L3.800 2.200 6 0.600H9.600V4.800H14.200L15.400 6V10.800L12 14.200H8.800V8.900H3.200z" fill="#cfe6f8" stroke="#2a70b4" stroke-width="1.02" stroke-linejoin="round"/><path d="M9.600 4.800L6.500 8.700 M0.800 6.200H6" fill="none" stroke="#2a70b4" stroke-width="0.935" /><rect x="6.600" y="10.800" width="4.800" height="4.700" fill="#fff" stroke="#222" stroke-width="1.100"/><path d="M11.400 9L6.800 4.600" fill="none" stroke="#222" stroke-width="1.1" /></svg><svg class="ic" style="left:317px;top:76px" width="16" height="16" viewBox="0 0 16 16"><path d="M3 0.800C6.500-0.800 11.500-0.300 14 2.200" fill="none" stroke="#222" stroke-width="1.1" /><path d="M1.500 3.400L2.300 0.200 5 2.400z" fill="#222" /><path d="M1 8.500C1 6.300 4.200 5 8.200 5S15.500 6.300 15.500 8.500V12.500L12.500 15V11C11 9.800 5.500 9.800 4 11.400V15C2 14 1 13 1 11.500z" fill="#bfe0f7" stroke="#2a70b4" stroke-width="1.02" stroke-linejoin="round"/><path d="M4 11.400C5.500 9.800 11 9.800 12.500 11" fill="none" stroke="#2a70b4" stroke-width="0.85" /><path d="M12.500 11L15.500 8.500V12.500L12.500 15z" fill="#fff" /><path d="M12.500 11L15.500 8.500V12.500L12.500 15z" fill="none" stroke="#222" stroke-width="1" /></svg><svg class="ic" style="left:340px;top:76px" width="16" height="16" viewBox="0 0 16 16"><defs><linearGradient id="gg" x1="0" y1="0" x2="1" y2="1"><stop offset="0" stop-color="#fff"/><stop offset="1" stop-color="#cfd3da"/></linearGradient><linearGradient id="gh" x1="0" y1="0" x2="1" y2="0"><stop offset="0" stop-color="#fff"/><stop offset="0.5" stop-color="#d4d8de"/><stop offset="1" stop-color="#fff"/></linearGradient><radialGradient id="gs" cx="55%" cy="40%" r="65%"><stop offset="0" stop-color="#fff"/><stop offset="1" stop-color="#d0d3da"/></radialGradient><linearGradient id="bg1" x1="0" y1="0" x2="0" y2="1"><stop offset="0" stop-color="#8ec8f0"/><stop offset="1" stop-color="#d8ecfb"/></linearGradient></defs><path d="M0.600 0.800H15.400V9.500L11 14H5L0.600 9.500z" fill="url(#bg1)" stroke="#2a70b4" stroke-width="1.02" stroke-linejoin="round"/><path d="M0.600 0.800L5.400 11 M15.400 0.800L10.600 11" fill="none" stroke="#e8f4fc" stroke-width="0.9" /><circle cx="8" cy="11.800" r="3.700" fill="#f6f4f8" stroke="#222" stroke-width="1.100"/></svg><div style="left:362px;top:75px;width:1.4px;height:18px;background:#1c1c1c"></div><svg class="ic" style="left:369px;top:76px" width="16" height="16" viewBox="0 0 16 16"><circle cx="5.6" cy="7.400" r="5.300" fill="#a9d5f5" stroke="none" stroke-width="1.200"/><circle cx="10.6" cy="7.400" r="5.300" fill="#a9d5f5" stroke="none" stroke-width="1.200"/><circle cx="5.6" cy="7.400" r="5.300" fill="none" stroke="#2a70b4" stroke-width="1.200"/><circle cx="10.6" cy="7.400" r="5.300" fill="none" stroke="#2a70b4" stroke-width="1.200"/></svg><svg class="ic" style="left:392px;top:76px" width="16" height="16" viewBox="0 0 16 16"><circle cx="5.6" cy="7.400" r="5.300" fill="#a9d5f5" stroke="#2a70b4" stroke-width="1.200"/><circle cx="10.600" cy="7.400" r="5.300" fill="#efefef" stroke="#4a4a4a" stroke-width="1"/><path d="M8.100 3.200C9.800 4.200 10.500 5.800 10.500 7.400S9.800 10.600 8.100 11.600" fill="none" stroke="#2a70b4" stroke-width="0.935" /></svg><svg class="ic" style="left:415px;top:76px" width="16" height="16" viewBox="0 0 16 16"><circle cx="5.600" cy="7.400" r="5.300" fill="none" stroke="#4a4a4a" stroke-width="1"/><circle cx="10.600" cy="7.400" r="5.300" fill="none" stroke="#4a4a4a" stroke-width="1"/><path d="M8.100 3.200C9.800 4.200 10.500 5.800 10.500 7.400S9.800 10.600 8.100 11.600C6.400 10.600 5.700 9 5.700 7.400S6.400 4.200 8.100 3.200z" fill="#c4e2f8" stroke="#2a70b4" stroke-width="1.02" /></svg><div style="left:437px;top:75px;width:1.4px;height:18px;background:#1c1c1c"></div><svg class="ic" style="left:444px;top:76px" width="16" height="16" viewBox="0 0 16 16"><path d="M7.400 1.300L14.300 4.400V11.600L7.400 15.500 0.600 11.600V4.400z M7.400 8.100V1.500 M7.400 8.100L1.500 11.600 M7.400 8.100L13.700 11.600" fill="none" stroke="#333" stroke-width="1" /><rect x="6.100" y="0.100" width="2.600" height="2.600" fill="#3f86c8" stroke="#234"/><rect x="0.300" y="10.300" width="2.600" height="2.600" fill="#2f7a3a"/><rect x="12.500" y="10.300" width="2.600" height="2.600" fill="#8a2828"/><rect x="6.300" y="7" width="2.200" height="2.200" fill="#efefef" stroke="#222" stroke-width="0.9"/></svg><svg class="ic" style="left:467px;top:76px" width="16" height="16" viewBox="0 0 16 16"><circle cx="8.200" cy="8.100" r="7.300" fill="#eef6ee" stroke="#2f8a4a" stroke-width="1.200"/><ellipse cx="8.200" cy="8.100" rx="7.300" ry="4.400" fill="#cfe4f8" stroke="#2c6fc0" stroke-width="1.100"/><ellipse cx="8.200" cy="8.100" rx="4.400" ry="7.300" fill="#fbe9e4" fill-opacity="0.6" stroke="#c8403a" stroke-width="1.100"/><circle cx="8.200" cy="8.100" r="2.600" fill="#f6f6f6" stroke="#8a6a9a" stroke-width="0.600"/><circle cx="8.200" cy="8.100" r="1.100" fill="#1e4a22"/></svg><svg class="ic" style="left:490px;top:76px" width="16" height="16" viewBox="0 0 16 16"><path d="M0.700 15.800V2" fill="none" stroke="#363636" stroke-width="1.2" /><path d="M0 3.500L1.800 0.300 2.400 3.500z" fill="#363636" /><rect x="2.500" y="2" width="7.800" height="7.600" rx="0.800" fill="#d4eafa" stroke="#2a70b4" stroke-width="1.100"/><rect x="4" y="4" width="3.500" height="3.500" fill="#9ccbee"/><rect x="2.500" y="9.600" width="12.800" height="5.800" rx="1" fill="#f2f3f6" stroke="#363636" stroke-width="1.200"/><rect x="4" y="11.300" width="9" height="2.600" fill="#d4d7de"/></svg><svg class="ic" style="left:513px;top:76px" width="16" height="16" viewBox="0 0 16 16"><g opacity="0.35"><path d="M6.5 1.98l1.68 -1.68h4.32v4.32l-1.68 1.68h-4.32z" fill="#d9edfb" /><rect x="6.5" y="1.98" width="4.32" height="4.32" fill="#8fc4ee"/><path d="M6.5 1.98l1.68 -1.68h4.32v4.32l-1.68 1.68h-4.32z M6.5 1.98h4.32v4.32" fill="none" stroke="#1f5fb0" stroke-width="1" /></g><g opacity="0.35"><path d="M10 1.98l1.68 -1.68h4.32v4.32l-1.68 1.68h-4.32z" fill="#d9edfb" /><rect x="10" y="1.98" width="4.32" height="4.32" fill="#8fc4ee"/><path d="M10 1.98l1.68 -1.68h4.32v4.32l-1.68 1.68h-4.32z M10 1.98h4.32v4.32" fill="none" stroke="#1f5fb0" stroke-width="1" /></g><g opacity="1"><path d="M0.3 4.16l1.96 -1.96h5.04v5.04l-1.96 1.96h-5.04z" fill="#d9edfb" /><rect x="0.3" y="4.16" width="5.04" height="5.04" fill="#8fc4ee"/><path d="M0.3 4.16l1.96 -1.96h5.04v5.04l-1.96 1.96h-5.04z M0.3 4.16h5.04v5.04" fill="none" stroke="#1f5fb0" stroke-width="1" /></g><g opacity="1"><path d="M7 4.16l1.96 -1.96h5.04v5.04l-1.96 1.96h-5.04z" fill="#d9edfb" /><rect x="7" y="4.16" width="5.04" height="5.04" fill="#8fc4ee"/><path d="M7 4.16l1.96 -1.96h5.04v5.04l-1.96 1.96h-5.04z M7 4.16h5.04v5.04" fill="none" stroke="#1f5fb0" stroke-width="1" /></g><g opacity="1"><path d="M0.3 10.76l1.96 -1.96h5.04v5.04l-1.96 1.96h-5.04z" fill="#d9edfb" /><rect x="0.3" y="10.76" width="5.04" height="5.04" fill="#8fc4ee"/><path d="M0.3 10.76l1.96 -1.96h5.04v5.04l-1.96 1.96h-5.04z M0.3 10.76h5.04v5.04" fill="none" stroke="#1f5fb0" stroke-width="1" /></g><g opacity="1"><path d="M7 10.76l1.96 -1.96h5.04v5.04l-1.96 1.96h-5.04z" fill="#d9edfb" /><rect x="7" y="10.76" width="5.04" height="5.04" fill="#8fc4ee"/><path d="M7 10.76l1.96 -1.96h5.04v5.04l-1.96 1.96h-5.04z M7 10.76h5.04v5.04" fill="none" stroke="#1f5fb0" stroke-width="1" /></g></svg>
<div style="left:533px;top:72px;width:488px;height:24px;background:#656565;border:1px solid #3a3a3a"></div><div style="left:543px;top:73px;width:477px;height:22px;background:#efefef"></div><svg class="ic" style="left:546px;top:76px" width="16" height="16" viewBox="0 0 16 16"><circle cx="5.6" cy="7.400" r="5.300" fill="#a9d5f5" stroke="none" stroke-width="1.200"/><circle cx="10.6" cy="7.400" r="5.300" fill="#a9d5f5" stroke="none" stroke-width="1.200"/><circle cx="5.6" cy="7.400" r="5.300" fill="none" stroke="#2a70b4" stroke-width="1.200"/><circle cx="10.6" cy="7.400" r="5.300" fill="none" stroke="#2a70b4" stroke-width="1.200"/></svg><svg class="ic" style="left:569px;top:76px" width="16" height="16" viewBox="0 0 16 16"><circle cx="5.6" cy="7.400" r="5.300" fill="#a9d5f5" stroke="#2a70b4" stroke-width="1.200"/><circle cx="10.600" cy="7.400" r="5.300" fill="#efefef" stroke="#4a4a4a" stroke-width="1"/><path d="M8.100 3.200C9.800 4.200 10.500 5.800 10.500 7.400S9.800 10.600 8.100 11.600" fill="none" stroke="#2a70b4" stroke-width="0.935" /></svg><svg class="ic" style="left:592px;top:76px" width="16" height="16" viewBox="0 0 16 16"><circle cx="5.600" cy="7.400" r="5.300" fill="none" stroke="#4a4a4a" stroke-width="1"/><circle cx="10.600" cy="7.400" r="5.300" fill="none" stroke="#4a4a4a" stroke-width="1"/><path d="M8.100 3.200C9.800 4.200 10.500 5.800 10.500 7.400S9.800 10.600 8.100 11.600C6.400 10.600 5.700 9 5.700 7.400S6.400 4.200 8.100 3.200z" fill="#c4e2f8" stroke="#2a70b4" stroke-width="1.02" /></svg><div style="left:614px;top:75px;width:1.4px;height:18px;background:#1c1c1c"></div><svg class="ic" style="left:621px;top:76px" width="16" height="16" viewBox="0 0 16 16"><path d="M0.400 4.400L4.200 0.600H15.500V11.600L11.600 15.400H0.400z" fill="#d4eafa" /><rect x="0.400" y="4.400" width="11.200" height="5.600" fill="#9fd0f2"/><rect x="0.400" y="10" width="11.200" height="5.400" fill="#f4f5f7"/><path d="M11.600 10L15.500 6.200V11.600L11.600 15.400z" fill="#d6d9df" /><path d="M0.400 4.400L4.200 0.600H15.500V11.600L11.600 15.400H0.400z M0.400 4.400h11.200v11 M11.600 4.400L15.500 0.600" fill="none" stroke="#2a4f78" stroke-width="1.2" stroke-linejoin="round"/><path d="M0.400 10h11.200l3.900-3.800" fill="none" stroke="#333" stroke-width="1" /><path d="M6 9.800V7 M4 9.300h4" fill="none" stroke="#111" stroke-width="1.2" /><path d="M4.200 7.600L6 5.500 7.800 7.600z" fill="#111" /></svg><svg class="ic" style="left:644px;top:76px" width="16" height="16" viewBox="0 0 16 16"><path d="M4.700 0.600V8.200 M0.900 4.400H8.500" fill="none" stroke="#111" stroke-width="1.2" /><path d="M3.300 2.100L4.700 0 6.100 2.100z M3.300 6.700L4.700 8.800 6.100 6.700z M2.400 3L0.300 4.400 2.400 5.800z M7 3L9.100 4.400 7 5.800z" fill="#111" /><path d="M6.3 8.811l2.511 -2.511h6.789v6.789l-2.511 2.511h-6.789z" fill="#eef7fd" /><rect x="6.3" y="8.811" width="6.789" height="6.789" fill="#a9d5f5"/><path d="M13.089 8.811l2.511 -2.511v6.789l-2.511 2.511z" fill="#d4eafa" /><path d="M6.3 8.811l2.511 -2.511h6.789v6.789l-2.511 2.511h-6.789z M6.3 8.811h6.789v6.789 M13.089 8.811l2.511 -2.511" fill="none" stroke="#2a70b4" stroke-width="0.935" stroke-linejoin="round"/></svg><svg class="ic" style="left:667px;top:76px" width="16" height="16" viewBox="0 0 16 16"><path d="M6.100 3.800V0.500H15.700V10.500L12 13.500z" fill="#cfe6f8" /><path d="M6.100 3.800V0.500H15.700V10.500L12 13.500" fill="none" stroke="#2a70b4" stroke-width="1.02" /><rect x="0.500" y="3.800" width="11.500" height="11.500" rx="1" fill="#d9edfb" stroke="#2a70b4" stroke-width="1.200"/><rect x="2.500" y="5.500" width="8.300" height="8.300" rx="0.800" fill="#f4f4f6" stroke="#3a3a3a" stroke-width="1.100"/><path d="M12 3.800L15.700 0.500" fill="none" stroke="#2a70b4" stroke-width="0.935" /></svg><svg class="ic" style="left:690px;top:76px" width="16" height="16" viewBox="0 0 16 16"><path d="M0.600 0.600L6.400 6.400 M6.400 0.600L0.600 6.400" fill="none" stroke="#d8303a" stroke-width="2.2" /><path d="M6.3 8.811l2.511 -2.511h6.789v6.789l-2.511 2.511h-6.789z" fill="#eef7fd" /><rect x="6.3" y="8.811" width="6.789" height="6.789" fill="#a9d5f5"/><path d="M13.089 8.811l2.511 -2.511v6.789l-2.511 2.511z" fill="#d4eafa" /><path d="M6.3 8.811l2.511 -2.511h6.789v6.789l-2.511 2.511h-6.789z M6.3 8.811h6.789v6.789 M13.089 8.811l2.511 -2.511" fill="none" stroke="#2a70b4" stroke-width="0.935" stroke-linejoin="round"/></svg><svg class="ic" style="left:713px;top:76px" width="16" height="16" viewBox="0 0 16 16"><path d="M5.800 2.600A3 3 0 1 1 3 1.600" fill="none" stroke="#111" stroke-width="1.3" /><path d="M2.300 0L5.200 1.300 2.600 3.300z" fill="#111" /><path d="M6.3 8.811l2.511 -2.511h6.789v6.789l-2.511 2.511h-6.789z" fill="#eef7fd" /><rect x="6.3" y="8.811" width="6.789" height="6.789" fill="#a9d5f5"/><path d="M13.089 8.811l2.511 -2.511v6.789l-2.511 2.511z" fill="#d4eafa" /><path d="M6.3 8.811l2.511 -2.511h6.789v6.789l-2.511 2.511h-6.789z M6.3 8.811h6.789v6.789 M13.089 8.811l2.511 -2.511" fill="none" stroke="#2a70b4" stroke-width="0.935" stroke-linejoin="round"/></svg><svg class="ic" style="left:736px;top:76px" width="16" height="16" viewBox="0 0 16 16"><path d="M0.400 5L3.400 2.200H8.500L12.500 12.500 9.800 15.400H0.400z" fill="#dfe2e7" /><path d="M0.400 5L3.400 2.200H8.500L12.500 12.500 9.800 15.400H0.400z" fill="none" stroke="#363636" stroke-width="1.2" stroke-linejoin="round"/><path d="M5.500 2.200L9.800 15.400 M5.500 2.200L3.800 5.500 8 15.400" fill="#a9d5f5" stroke="#2a70b4" stroke-width="0.935" /><path d="M8.500 2.200L12.500 12.500 9.800 15.400 5.500 2.200z" fill="#bfe0f7" stroke="#2a70b4" stroke-width="0.935" /><path d="M14.800 8.200L11.500 1.800" fill="none" stroke="#111" stroke-width="1.3" /><path d="M10 0.300L14.300 1.800 11 4.200z" fill="#111" /></svg><svg class="ic" style="left:759px;top:76px" width="16" height="16" viewBox="0 0 16 16"><path d="M4.800 3.800V0.600H15.700V11L12.500 14.200H9z" fill="#e3f1fc" /><path d="M4.800 3.500V0.600H15.700V11L12.500 14.200H9 M12.500 3.800L15.700 0.600 M6.800 6.800V3.800H12.500V11.500" fill="none" stroke="#2a70b4" stroke-width="0.935" /><rect x="0.500" y="7.200" width="8.300" height="8.300" rx="0.800" fill="#b5dbf6" stroke="#2a70b4" stroke-width="1.200"/><path d="M3.500 1.200H1.800V4.500" fill="none" stroke="#111" stroke-width="1.2" /><path d="M0.200 3.700L1.800 6 3.400 3.700z" fill="#111" /></svg><svg class="ic" style="left:782px;top:76px" width="16" height="16" viewBox="0 0 16 16"><rect x="0.600" y="0.700" width="2.800" height="2.800" rx="0.600" fill="#3f86c8" stroke="#245a8c" stroke-width="0.800"/><rect x="5.600" y="0.700" width="2.800" height="2.800" rx="0.600" fill="#c0343e" stroke="#8a2028" stroke-width="0.800"/><rect x="0.600" y="5.700" width="2.800" height="2.800" rx="0.600" fill="#e8902c" stroke="#b06010" stroke-width="0.800"/><path d="M6.3 8.811l2.511 -2.511h6.789v6.789l-2.511 2.511h-6.789z" fill="#eef7fd" /><rect x="6.3" y="8.811" width="6.789" height="6.789" fill="#a9d5f5"/><path d="M13.089 8.811l2.511 -2.511v6.789l-2.511 2.511z" fill="#d4eafa" /><path d="M6.3 8.811l2.511 -2.511h6.789v6.789l-2.511 2.511h-6.789z M6.3 8.811h6.789v6.789 M13.089 8.811l2.511 -2.511" fill="none" stroke="#2a70b4" stroke-width="0.935" stroke-linejoin="round"/></svg><div style="left:804px;top:75px;width:1.4px;height:18px;background:#1c1c1c"></div><svg class="ic" style="left:811px;top:76px" width="16" height="16" viewBox="0 0 16 16"><path d="M0.300 4C0.300 1.500 2 0.500 4 0.500H11.500L15.500 4.500V15.400H4.200L0.300 11.600z" fill="#fff" /><path d="M4.200 15.400V8C4.200 5.500 6 4.500 8 4.500H15.500V15.400z" fill="#b9bdc6" /><path d="M0.300 4C0.300 1.500 2 0.500 4 0.500H7.500C5.500 0.500 4.200 2 4.200 4.500V8C4.200 5.500 6 4.500 8 4.500L11.500 0.500H7.500" fill="#a9d5f5" /><path d="M0.300 4C0.300 1.500 2 0.500 4 0.500H11.500L15.500 4.500V15.400H4.200L0.300 11.600z" fill="none" stroke="#2a3f5c" stroke-width="1.2" stroke-linejoin="round"/><path d="M4.200 15.400V8C4.200 5.500 6 4.500 8 4.500 M0.300 4C0.300 6 2 7.500 4.200 8 M8 4.500C8 2.500 7 0.800 5 0.500" fill="none" stroke="#2a70b4" stroke-width="0.935" /></svg><svg class="ic" style="left:834px;top:76px" width="16" height="16" viewBox="0 0 16 16"><path d="M0.300 6.900L6.900 0.400H11.600L15.600 4.400V15.400H4.400L0.300 11.600z" fill="#fff" /><path d="M4.400 15.400V9.500L9.500 4.400H15.600V15.400z" fill="#b9bdc6" /><path d="M0.300 6.900L6.900 0.400 11.600 4.400 4.400 9.500z" fill="#a9d5f5" /><path d="M0.300 6.900L6.900 0.400H11.600L15.600 4.400V15.400H4.400L0.300 11.600z" fill="none" stroke="#2a3f5c" stroke-width="1.2" stroke-linejoin="round"/><path d="M4.400 9.500L0.300 6.900 M4.400 9.500L11 3.500 6.900 0.400" fill="none" stroke="#2a70b4" stroke-width="0.935" /></svg><svg class="ic" style="left:857px;top:76px" width="16" height="16" viewBox="0 0 16 16"><path d="M0.600 5.900V15.400" fill="none" stroke="#2a70b4" stroke-width="1.105" /><path d="M3.6 6.394l3.294 -3.294h8.906v8.906l-3.294 3.294h-8.906z" fill="#fff" /><rect x="3.6" y="6.394" width="8.906" height="8.906" fill="#e6e8ed"/><path d="M12.506 6.394l3.294 -3.294v8.906l-3.294 3.294z" fill="#cdd0d7" /><path d="M3.6 6.394l3.294 -3.294h8.906v8.906l-3.294 3.294h-8.906z M3.6 6.394h8.906v8.906 M12.506 6.394l3.294 -3.294" fill="none" stroke="#2a3f5c" stroke-width="1.1" stroke-linejoin="round"/><path d="M4.800 1.200H2.500" fill="none" stroke="#111" stroke-width="1.2" /><path d="M1 0.600L3.800 3.400" fill="none" stroke="#111" stroke-width="1.3" /><path d="M0.300 0L3.300 0.500 0.800 3z" fill="#111" /></svg><svg class="ic" style="left:880px;top:76px" width="16" height="16" viewBox="0 0 16 16"><rect x="0.600" y="0.700" width="2.800" height="2.800" rx="0.600" fill="#3f86c8" stroke="#245a8c" stroke-width="0.800"/><rect x="5.600" y="0.700" width="2.800" height="2.800" rx="0.600" fill="#c0343e" stroke="#8a2028" stroke-width="0.800"/><rect x="0.600" y="5.700" width="2.800" height="2.800" rx="0.600" fill="#e8902c" stroke="#b06010" stroke-width="0.800"/><path d="M6.3 8.811l2.511 -2.511h6.789v6.789l-2.511 2.511h-6.789z" fill="#fff" /><rect x="6.3" y="8.811" width="6.789" height="6.789" fill="#ebedf1"/><path d="M13.089 8.811l2.511 -2.511v6.789l-2.511 2.511z" fill="#d0d3da" /><path d="M6.3 8.811l2.511 -2.511h6.789v6.789l-2.511 2.511h-6.789z M6.3 8.811h6.789v6.789 M13.089 8.811l2.511 -2.511" fill="none" stroke="#2a4f78" stroke-width="1.1" stroke-linejoin="round"/></svg><div style="left:902px;top:75px;width:1.4px;height:18px;background:#1c1c1c"></div><svg class="ic" style="left:909px;top:76px" width="16" height="16" viewBox="0 0 16 16"><path d="M3.2 6.394l3.294 -3.294h8.906v8.906l-3.294 3.294h-8.906z" fill="#fff" /><rect x="3.2" y="6.394" width="8.906" height="8.906" fill="#dfe8f2"/><path d="M12.106 6.394l3.294 -3.294v8.906l-3.294 3.294z" fill="#c6cad2" /><path d="M3.2 6.394l3.294 -3.294h8.906v8.906l-3.294 3.294h-8.906z M3.2 6.394h8.906v8.906 M12.106 6.394l3.294 -3.294" fill="none" stroke="#2a3f5c" stroke-width="1.1" stroke-linejoin="round"/><path d="M3.200 6.400L12.100 15.300" fill="none" stroke="#2a3f5c" stroke-width="1.1" /><path d="M2.400 0.300V4.700 M0.200 2.500H4.600" fill="none" stroke="#111" stroke-width="1.4" /></svg><svg class="ic" style="left:932px;top:76px" width="16" height="16" viewBox="0 0 16 16"><defs><linearGradient id="scg" x1="0" y1="0" x2="1" y2="1"><stop offset="0" stop-color="#9fcdf0"/><stop offset="1" stop-color="#e8f4e8"/></linearGradient></defs><path d="M0.500 3.500L3.500 0.500H14.900V11L11.500 14.400H0.500z" fill="#d9edfb" /><rect x="0.500" y="3.500" width="11" height="10.900" fill="url(#scg)"/><path d="M0.500 3.500L3.500 0.500H14.900V11 M0.500 3.500V14.400H8.500 M0.500 3.500H11.500" fill="none" stroke="#2a70b4" stroke-width="1.105" /><path d="M12.700 4.400V10" fill="none" stroke="#b07818" stroke-width="1.3" /><path d="M11.700 9.500h2l0.500 3h-3z M10.300 12.500h4.800l0.700 3.200H9.600z" fill="#f0b820" /><path d="M10.300 12.500h4.800l0.700 3.200H9.600z" fill="none" stroke="#b07818" stroke-width="0.7" /></svg><svg class="ic" style="left:955px;top:76px" width="16" height="16" viewBox="0 0 16 16"><path d="M0.700 4L3 2.300H5.600V13L3.300 14.800H0.700z M3.300 4V14.800" fill="#d4eafa" stroke="#2a70b4" stroke-width="0.935" /><path d="M9.800 4L12.100 2.300H14.900V13L12.500 14.800H9.800z M12.500 4V14.800" fill="#d4eafa" stroke="#2a70b4" stroke-width="0.935" /><path d="M7.500 0.300V15.700" fill="none" stroke="#111" stroke-width="1.1" stroke-dasharray="1.3 1.700"/></svg><svg class="ic" style="left:978px;top:76px" width="16" height="16" viewBox="0 0 16 16"><path d="M0.500 4.300L4.500 0.400H15.700V11.500L11.800 15.400H0.500z" fill="#d4eafa" /><rect x="0.500" y="4.300" width="11.300" height="11.100" fill="#8ec8f0"/><path d="M0.500 4.300L4.500 0.400H15.700V11.500L11.800 15.400H0.500z M11.800 4.300L15.700 0.400" fill="none" stroke="#2a70b4" stroke-width="1.105" stroke-linejoin="round"/><rect x="2.800" y="6.600" width="6.800" height="6.600" fill="#cfe8fa" stroke="#1f66b0" stroke-width="1.500"/><rect x="5.800" y="7" width="3.200" height="3" fill="#fff"/></svg><svg class="ic" style="left:1001px;top:76px" width="16" height="16" viewBox="0 0 16 16"><path d="M2.200 3.500L5.200 0.400H15.800V10.500L12.600 13.500H2.200z" fill="#e3f1fc" /><rect x="3" y="4" width="9" height="9" fill="#c4d9ee" opacity="0.700"/><path d="M2.200 8V3.500L5.200 0.400H15.800V10.500L12.600 13.500H8.500 M12.600 3.500V13.500 M2.200 3.500H12.600L15.800 0.400" fill="none" stroke="#2a70b4" stroke-width="1.02" /><path d="M0.800 9.800L4 14.200 9.500 7.500" fill="none" stroke="#4a9a28" stroke-width="2.4" /></svg>
<div style="left:3px;top:101px;width:1px;height:21px;background:#fff"></div>
<div style="left:4px;top:101px;width:1px;height:21px;background:#8d8d8d"></div>
<div style="left:7px;top:101px;width:1px;height:21px;background:#fff"></div>
<div style="left:8px;top:101px;width:1px;height:21px;background:#8d8d8d"></div>
<div style="left:11px;top:101px;width:1px;height:21px;background:#fff"></div>
<div style="left:12px;top:101px;width:1px;height:21px;background:#8d8d8d"></div>
<svg class="a" style="left:0;top:100px" width="1600" height="24" viewBox="0 100 1600 24"><path d="M42 123 V105 Q42 101 46 101 H125 L132 106 L139 101 H215 L222 106 L229 101 H305 L312 106 L319 101 H395 L402 106 L409 101 H485 L492 106 L499 101 H575 L582 106 L589 101 H665 L672 106 L679 101 H755 L762 106 L769 101 H845 L852 106 L859 101 H935 L942 106 L949 101 H1025 L1032 106 L1039 101 H1115 L1122 106 L1129 101 H1205 L1212 106 L1219 101 H1295 L1302 106 L1309 101 H1385 L1392 106 L1399 101 H1475 L1482 106 L1489 101 H1566 L1572 107 V123 Z" fill="#ececec"/><path d="M132.500 106.500V123" stroke="#bdbdbd" stroke-width="1"/><path d="M222.500 106.500V123" stroke="#bdbdbd" stroke-width="1"/><path d="M312.500 106.500V123" stroke="#bdbdbd" stroke-width="1"/><path d="M402.500 106.500V123" stroke="#bdbdbd" stroke-width="1"/><path d="M492.500 106.500V123" stroke="#bdbdbd" stroke-width="1"/><path d="M582.500 106.500V123" stroke="#bdbdbd" stroke-width="1"/><path d="M672.500 106.500V123" stroke="#bdbdbd" stroke-width="1"/><path d="M762.500 106.500V123" stroke="#bdbdbd" stroke-width="1"/><path d="M852.500 106.500V123" stroke="#bdbdbd" stroke-width="1"/><path d="M942.500 106.500V123" stroke="#bdbdbd" stroke-width="1"/><path d="M1032.500 106.500V123" stroke="#bdbdbd" stroke-width="1"/><path d="M1122.500 106.500V123" stroke="#bdbdbd" stroke-width="1"/><path d="M1212.500 106.500V123" stroke="#bdbdbd" stroke-width="1"/><path d="M1302.500 106.500V123" stroke="#bdbdbd" stroke-width="1"/><path d="M1392.500 106.500V123" stroke="#bdbdbd" stroke-width="1"/><path d="M1482.500 106.500V123" stroke="#bdbdbd" stroke-width="1"/></svg>
<svg class="t" style="left:57.40px;top:103.60px" width="59.0" height="19.6" ><text class="cs" x="1.00" y="14.00" font-size="14.00" fill="#1a1a1a">显示控制</text></svg><span class="h" style="left:58.4px;top:103.6px;width:56.0px;font-size:14.0px">显示控制</span>
<svg class="t" style="left:147.40px;top:103.60px" width="59.0" height="19.6" ><text class="cs" x="1.00" y="14.00" font-size="14.00" fill="#1a1a1a">创建对象</text></svg><span class="h" style="left:148.4px;top:103.6px;width:56.0px;font-size:14.0px">创建对象</span>
<svg class="t" style="left:237.40px;top:103.60px" width="59.0" height="19.6" ><text class="cs" x="1.00" y="14.00" font-size="14.00" fill="#1a1a1a">修改对象</text></svg><span class="h" style="left:238.4px;top:103.6px;width:56.0px;font-size:14.0px">修改对象</span>
<svg class="t" style="left:327.40px;top:103.60px" width="59.0" height="19.6" ><text class="cs" x="1.00" y="14.00" font-size="14.00" fill="#1a1a1a">二维墙料</text></svg><span class="h" style="left:328.4px;top:103.6px;width:56.0px;font-size:14.0px">二维墙料</span>
<svg class="t" style="left:417.40px;top:103.60px" width="59.0" height="19.6" ><text class="cs" x="1.00" y="14.00" font-size="14.00" fill="#1a1a1a">墙面分缝</text></svg><span class="h" style="left:418.4px;top:103.6px;width:56.0px;font-size:14.0px">墙面分缝</span>
<svg class="t" style="left:507.40px;top:103.60px" width="59.0" height="19.6" ><text class="cs" x="1.00" y="14.00" font-size="14.00" fill="#1a1a1a">二维门窗</text></svg><span class="h" style="left:508.4px;top:103.6px;width:56.0px;font-size:14.0px">二维门窗</span>
<svg class="t" style="left:597.40px;top:103.60px" width="59.0" height="19.6" ><text class="cs" x="1.00" y="14.00" font-size="14.00" fill="#1a1a1a">二维配件</text></svg><span class="h" style="left:598.4px;top:103.6px;width:56.0px;font-size:14.0px">二维配件</span>
<svg class="t" style="left:687.40px;top:103.60px" width="59.0" height="19.6" ><text class="cs" x="1.00" y="14.00" font-size="14.00" fill="#1a1a1a">平面排版</text></svg><span class="h" style="left:688.4px;top:103.6px;width:56.0px;font-size:14.0px">平面排版</span>
<svg class="t" style="left:777.40px;top:103.60px" width="59.0" height="19.6" ><text class="cs" x="1.00" y="14.00" font-size="14.00" fill="#1a1a1a">其它工具</text></svg><span class="h" style="left:778.4px;top:103.6px;width:56.0px;font-size:14.0px">其它工具</span>
<svg class="t" style="left:852px;top:104px" width="90" height="18"><text x="45" y="0" transform="translate(0,13.300) scale(1,1.180)" text-anchor="middle" font-family="Liberation Mono" font-size="11.650" fill="#1a1a1a">Attach Rhino</text></svg>
<svg class="t" style="left:957.40px;top:103.60px" width="59.0" height="19.6" ><text class="cs" x="1.00" y="14.00" font-size="14.00" fill="#1a1a1a">三维墙体</text></svg><span class="h" style="left:958.4px;top:103.6px;width:56.0px;font-size:14.0px">三维墙体</span>
<svg class="t" style="left:1047.40px;top:103.60px" width="59.0" height="19.6" ><text class="cs" x="1.00" y="14.00" font-size="14.00" fill="#1a1a1a">三维门窗</text></svg><span class="h" style="left:1048.4px;top:103.6px;width:56.0px;font-size:14.0px">三维门窗</span>
<svg class="t" style="left:1137.40px;top:103.60px" width="59.0" height="19.6" ><text class="cs" x="1.00" y="14.00" font-size="14.00" fill="#1a1a1a">三维线脚</text></svg><span class="h" style="left:1138.4px;top:103.6px;width:56.0px;font-size:14.0px">三维线脚</span>
<svg class="t" style="left:1237.90px;top:103.60px" width="38.0" height="19.6" ><text class="cs" x="1.00" y="14.00" font-size="14.00" word-spacing="3.1" fill="#1a1a1a">灯 板</text></svg><span class="h" style="left:1238.9px;top:103.6px;width:35.0px;font-size:14.0px">灯 板</span>
<svg class="t" style="left:1327.90px;top:103.60px" width="38.0" height="19.6" ><text class="cs" x="1.00" y="14.00" font-size="14.00" word-spacing="3.1" fill="#1a1a1a">展 料</text></svg><span class="h" style="left:1328.9px;top:103.6px;width:35.0px;font-size:14.0px">展 料</span>
<svg class="t" style="left:1407.40px;top:103.60px" width="59.0" height="19.6" ><text class="cs" x="1.00" y="14.00" font-size="14.00" fill="#1a1a1a">转换工具</text></svg><span class="h" style="left:1408.4px;top:103.6px;width:56.0px;font-size:14.0px">转换工具</span>
<svg class="t" style="left:1507.90px;top:103.60px" width="38.0" height="19.6" ><text class="cs" x="1.00" y="14.00" font-size="14.00" word-spacing="3.1" fill="#1a1a1a">编 号</text></svg><span class="h" style="left:1508.9px;top:103.6px;width:35.0px;font-size:14.0px">编 号</span>
<div style="left:1px;top:126px;width:183px;height:1px;background:#fff"></div>
<div style="left:1px;top:127px;width:183px;height:1px;background:#858585"></div>
<div style="left:1px;top:130px;width:183px;height:1px;background:#fff"></div>
<div style="left:1px;top:131px;width:183px;height:1px;background:#858585"></div>
<div style="left:1px;top:134px;width:183px;height:1px;background:#fff"></div>
<div style="left:1px;top:135px;width:183px;height:1px;background:#858585"></div>
<div style="left:10px;top:143px;width:80px;height:22px;background:#ececec;border-radius:4px"></div>
<svg class="t" style="left:25.00px;top:146.60px" width="51.0" height="16.8" ><text class="cs" x="1.00" y="12.00" font-size="12.00" fill="#161616">编号列表</text></svg><span class="h" style="left:26.0px;top:146.6px;width:48.0px;font-size:12.0px">编号列表</span>
<div style="left:95px;top:143px;width:80px;height:22px;background:#ececec;border-radius:4px"></div>
<svg class="t" style="left:98.00px;top:146.60px" width="75.0" height="16.8" ><text class="cs" x="1.00" y="12.00" font-size="12.00" fill="#161616">提取文本编号</text></svg><span class="h" style="left:99.0px;top:146.6px;width:72.0px;font-size:12.0px">提取文本编号</span>
<div style="left:10px;top:170px;width:80px;height:22px;background:#ececec;border-radius:4px"></div>
<svg class="t" style="left:37.00px;top:173.60px" width="27.0" height="16.8" ><text class="cs" x="1.00" y="12.00" font-size="12.00" fill="#161616">预留</text></svg><span class="h" style="left:38.0px;top:173.6px;width:24.0px;font-size:12.0px">预留</span>
<div style="left:95px;top:170px;width:80px;height:22px;background:#ececec;border-radius:4px"></div>
<svg class="t" style="left:122.00px;top:173.60px" width="27.0" height="16.8" ><text class="cs" x="1.00" y="12.00" font-size="12.00" fill="#161616">预留</text></svg><span class="h" style="left:123.0px;top:173.6px;width:24.0px;font-size:12.0px">预留</span>
<div style="left:10px;top:197px;width:80px;height:22px;background:#ececec;border-radius:4px"></div>
<svg class="t" style="left:37.00px;top:200.60px" width="27.0" height="16.8" ><text class="cs" x="1.00" y="12.00" font-size="12.00" fill="#161616">预留</text></svg><span class="h" style="left:38.0px;top:200.6px;width:24.0px;font-size:12.0px">预留</span>
<div style="left:95px;top:197px;width:80px;height:22px;background:#ececec;border-radius:4px"></div>
<svg class="t" style="left:122.00px;top:200.60px" width="27.0" height="16.8" ><text class="cs" x="1.00" y="12.00" font-size="12.00" fill="#161616">预留</text></svg><span class="h" style="left:123.0px;top:200.6px;width:24.0px;font-size:12.0px">预留</span>
<div style="left:10px;top:224px;width:80px;height:22px;background:#ececec;border-radius:4px"></div>
<svg class="t" style="left:37.00px;top:227.60px" width="27.0" height="16.8" ><text class="cs" x="1.00" y="12.00" font-size="12.00" fill="#161616">预留</text></svg><span class="h" style="left:38.0px;top:227.6px;width:24.0px;font-size:12.0px">预留</span>
<div style="left:95px;top:224px;width:80px;height:22px;background:#ececec;border-radius:4px"></div>
<svg class="t" style="left:122.00px;top:227.60px" width="27.0" height="16.8" ><text class="cs" x="1.00" y="12.00" font-size="12.00" fill="#161616">预留</text></svg><span class="h" style="left:123.0px;top:227.6px;width:24.0px;font-size:12.0px">预留</span>
<div style="left:10px;top:251px;width:80px;height:22px;background:#ececec;border-radius:4px"></div>
<svg class="t" style="left:25.00px;top:254.60px" width="51.0" height="16.8" ><text class="cs" x="1.00" y="12.00" font-size="12.00" fill="#161616">编号文本</text></svg><span class="h" style="left:26.0px;top:254.6px;width:48.0px;font-size:12.0px">编号文本</span>
<div style="left:95px;top:251px;width:80px;height:22px;background:#ececec;border-radius:4px"></div>
<svg class="t" style="left:122.00px;top:254.60px" width="27.0" height="16.8" ><text class="cs" x="1.00" y="12.00" font-size="12.00" fill="#161616">预留</text></svg><span class="h" style="left:123.0px;top:254.6px;width:24.0px;font-size:12.0px">预留</span>
<div style="left:10px;top:278px;width:80px;height:22px;background:#ececec;border-radius:4px"></div>
<svg class="t" style="left:37.00px;top:281.60px" width="27.0" height="16.8" ><text class="cs" x="1.00" y="12.00" font-size="12.00" fill="#161616">预留</text></svg><span class="h" style="left:38.0px;top:281.6px;width:24.0px;font-size:12.0px">预留</span>
<div style="left:95px;top:278px;width:80px;height:22px;background:#ececec;border-radius:4px"></div>
<svg class="t" style="left:106.85px;top:281.60px" width="57.3" height="16.8" ><text class="cs" x="1.00" y="12.00" font-size="12.00" fill="#161616">墙料排序</text><text x="49.00" y="12.00" font-family="Liberation Mono" font-size="10.50" fill="#161616">1</text></svg><span class="h" style="left:107.8px;top:281.6px;width:54.3px;font-size:12.0px">墙料排序1</span>
<div style="left:10px;top:305px;width:80px;height:22px;background:#ececec;border-radius:4px"></div>
<svg class="t" style="left:21.85px;top:308.60px" width="57.3" height="16.8" ><text class="cs" x="1.00" y="12.00" font-size="12.00" fill="#161616">墙料排序</text><text x="49.00" y="12.00" font-family="Liberation Mono" font-size="10.50" fill="#161616">2</text></svg><span class="h" style="left:22.8px;top:308.6px;width:54.3px;font-size:12.0px">墙料排序2</span>
<div style="left:95px;top:305px;width:80px;height:22px;background:#ececec;border-radius:4px"></div>
<svg class="t" style="left:103.70px;top:308.60px" width="63.6" height="16.8" ><text class="cs" x="1.00" y="12.00" font-size="12.00" fill="#161616">墙料编号</text><text x="49.00" y="12.00" font-family="Liberation Mono" font-size="10.50" fill="#161616">+N</text></svg><span class="h" style="left:104.7px;top:308.6px;width:60.6px;font-size:12.0px">墙料编号+N</span>
<div style="left:10px;top:332px;width:80px;height:22px;background:#ececec;border-radius:4px"></div>
<svg class="t" style="left:25.00px;top:335.60px" width="51.0" height="16.8" ><text class="cs" x="1.00" y="12.00" font-size="12.00" fill="#161616">重新编号</text></svg><span class="h" style="left:26.0px;top:335.6px;width:48.0px;font-size:12.0px">重新编号</span>
<div style="left:95px;top:332px;width:80px;height:22px;background:#ececec;border-radius:4px"></div>
<svg class="t" style="left:122.00px;top:335.60px" width="27.0" height="16.8" ><text class="cs" x="1.00" y="12.00" font-size="12.00" fill="#161616">预留</text></svg><span class="h" style="left:123.0px;top:335.6px;width:24.0px;font-size:12.0px">预留</span>
<div style="left:10px;top:359px;width:80px;height:22px;background:#ececec;border-radius:4px"></div>
<svg class="t" style="left:37.00px;top:362.60px" width="27.0" height="16.8" ><text class="cs" x="1.00" y="12.00" font-size="12.00" fill="#161616">预留</text></svg><span class="h" style="left:38.0px;top:362.6px;width:24.0px;font-size:12.0px">预留</span>
<div style="left:95px;top:359px;width:80px;height:22px;background:#ececec;border-radius:4px"></div>
<svg class="t" style="left:122.00px;top:362.60px" width="27.0" height="16.8" ><text class="cs" x="1.00" y="12.00" font-size="12.00" fill="#161616">预留</text></svg><span class="h" style="left:123.0px;top:362.6px;width:24.0px;font-size:12.0px">预留</span>
<div style="left:10px;top:386px;width:80px;height:22px;background:#ececec;border-radius:4px"></div>
<svg class="t" style="left:37.00px;top:389.60px" width="27.0" height="16.8" ><text class="cs" x="1.00" y="12.00" font-size="12.00" fill="#161616">预留</text></svg><span class="h" style="left:38.0px;top:389.6px;width:24.0px;font-size:12.0px">预留</span>
<div style="left:95px;top:386px;width:80px;height:22px;background:#ececec;border-radius:4px"></div>
<svg class="t" style="left:122.00px;top:389.60px" width="27.0" height="16.8" ><text class="cs" x="1.00" y="12.00" font-size="12.00" fill="#161616">预留</text></svg><span class="h" style="left:123.0px;top:389.6px;width:24.0px;font-size:12.0px">预留</span>
<div style="left:10px;top:413px;width:80px;height:22px;background:#ececec;border-radius:4px"></div>
<svg class="t" style="left:37.00px;top:416.60px" width="27.0" height="16.8" ><text class="cs" x="1.00" y="12.00" font-size="12.00" fill="#161616">预留</text></svg><span class="h" style="left:38.0px;top:416.6px;width:24.0px;font-size:12.0px">预留</span>
<div style="left:95px;top:413px;width:80px;height:22px;background:#ececec;border-radius:4px"></div>
<svg class="t" style="left:122.00px;top:416.60px" width="27.0" height="16.8" ><text class="cs" x="1.00" y="12.00" font-size="12.00" fill="#161616">预留</text></svg><span class="h" style="left:123.0px;top:416.6px;width:24.0px;font-size:12.0px">预留</span>
<div style="left:10px;top:440px;width:80px;height:22px;background:#ececec;border-radius:4px"></div>
<svg class="t" style="left:37.00px;top:443.60px" width="27.0" height="16.8" ><text class="cs" x="1.00" y="12.00" font-size="12.00" fill="#161616">预留</text></svg><span class="h" style="left:38.0px;top:443.6px;width:24.0px;font-size:12.0px">预留</span>
<div style="left:95px;top:440px;width:80px;height:22px;background:#ececec;border-radius:4px"></div>
<svg class="t" style="left:122.00px;top:443.60px" width="27.0" height="16.8" ><text class="cs" x="1.00" y="12.00" font-size="12.00" fill="#161616">预留</text></svg><span class="h" style="left:123.0px;top:443.6px;width:24.0px;font-size:12.0px">预留</span>
<div style="left:10px;top:467px;width:80px;height:22px;background:#ececec;border-radius:4px"></div>
<svg class="t" style="left:37.00px;top:470.60px" width="27.0" height="16.8" ><text class="cs" x="1.00" y="12.00" font-size="12.00" fill="#161616">预留</text></svg><span class="h" style="left:38.0px;top:470.6px;width:24.0px;font-size:12.0px">预留</span>
<div style="left:95px;top:467px;width:80px;height:22px;background:#ececec;border-radius:4px"></div>
<svg class="t" style="left:122.00px;top:470.60px" width="27.0" height="16.8" ><text class="cs" x="1.00" y="12.00" font-size="12.00" fill="#161616">预留</text></svg><span class="h" style="left:123.0px;top:470.6px;width:24.0px;font-size:12.0px">预留</span>
<div style="left:10px;top:494px;width:80px;height:22px;background:#ececec;border-radius:4px"></div>
<svg class="t" style="left:37.00px;top:497.60px" width="27.0" height="16.8" ><text class="cs" x="1.00" y="12.00" font-size="12.00" fill="#161616">预留</text></svg><span class="h" style="left:38.0px;top:497.6px;width:24.0px;font-size:12.0px">预留</span>
<div style="left:95px;top:494px;width:80px;height:22px;background:#ececec;border-radius:4px"></div>
<svg class="t" style="left:122.00px;top:497.60px" width="27.0" height="16.8" ><text class="cs" x="1.00" y="12.00" font-size="12.00" fill="#161616">预留</text></svg><span class="h" style="left:123.0px;top:497.6px;width:24.0px;font-size:12.0px">预留</span>
<div style="left:10px;top:521px;width:80px;height:22px;background:#ececec;border-radius:4px"></div>
<svg class="t" style="left:37.00px;top:524.60px" width="27.0" height="16.8" ><text class="cs" x="1.00" y="12.00" font-size="12.00" fill="#161616">预留</text></svg><span class="h" style="left:38.0px;top:524.6px;width:24.0px;font-size:12.0px">预留</span>
<div style="left:95px;top:521px;width:80px;height:22px;background:#ececec;border-radius:4px"></div>
<svg class="t" style="left:122.00px;top:524.60px" width="27.0" height="16.8" ><text class="cs" x="1.00" y="12.00" font-size="12.00" fill="#161616">预留</text></svg><span class="h" style="left:123.0px;top:524.6px;width:24.0px;font-size:12.0px">预留</span>
<div style="left:185px;top:125px;width:1736px;height:764px;background:#fff"></div>
<div style="left:185px;top:125px;width:1733px;height:2px;background:#949494"></div>
<div style="left:185px;top:125px;width:2px;height:764px;background:#949494"></div>
<div style="left:1920px;top:125px;width:1px;height:764px;background:#333"></div>
<div style="left:187px;top:127px;width:1731px;height:745px;background:#000"></div>
<div style="left:187px;top:872px;width:1731px;height:16px;background:#efefef;border-top:1px solid #fff"></div>
<div style="left:454px;top:192px;width:941px;height:129px;background:#fff;border:1px solid #b00000;box-shadow:0 0 0 1px rgba(120,0,0,.55)"></div>
<div style="left:455px;top:224px;width:939px;height:1px;background:#000"></div>
<div style="left:455px;top:256px;width:939px;height:1px;background:#000"></div>
<div style="left:455px;top:288px;width:939px;height:1px;background:#000"></div>
<div style="left:606px;top:193px;width:1px;height:127px;background:#000"></div>
<div style="left:951px;top:193px;width:1px;height:127px;background:#000"></div>
<svg class="t" style="left:458.5px;top:196.2px" width="43" height="26"><text transform="translate(0,20) scale(1,1.17)" font-family="Liberation Mono" font-size="16.25" fill="#262626">tq4,</text></svg>
<svg class="t" style="left:608.5px;top:196.2px" width="189.25" height="26"><text transform="translate(0,20) scale(1,1.17)" font-family="Liberation Mono" font-size="16.25" fill="#262626">*AmCreateIndexText4</text></svg>
<svg class="t" style="left:955.00px;top:197.30px" width="80.6" height="27.3" ><text class="cr" x="1.00" y="19.50" font-size="19.50" letter-spacing="-0.1" fill="#111">墙料排序</text></svg><span class="h" style="left:956.0px;top:197.3px;width:77.6px;font-size:19.5px">墙料排序</span>
<svg class="t" style="left:1033.6px;top:196.2px" width="13.75" height="26"><text transform="translate(0,20) scale(1,1.17)" font-family="Liberation Mono" font-size="16.25" fill="#262626">1</text></svg>
<svg class="t" style="left:458.5px;top:228.2px" width="43" height="26"><text transform="translate(0,20) scale(1,1.17)" font-family="Liberation Mono" font-size="16.25" fill="#262626">tq5,</text></svg>
<svg class="t" style="left:608.5px;top:228.2px" width="189.25" height="26"><text transform="translate(0,20) scale(1,1.17)" font-family="Liberation Mono" font-size="16.25" fill="#262626">*AmCreateIndexText5</text></svg>
<svg class="t" style="left:955.00px;top:229.30px" width="80.6" height="27.3" ><text class="cr" x="1.00" y="19.50" font-size="19.50" letter-spacing="-0.1" fill="#111">墙料排序</text></svg><span class="h" style="left:956.0px;top:229.3px;width:77.6px;font-size:19.5px">墙料排序</span>
<svg class="t" style="left:1033.6px;top:228.2px" width="13.75" height="26"><text transform="translate(0,20) scale(1,1.17)" font-family="Liberation Mono" font-size="16.25" fill="#262626">2</text></svg>
<svg class="t" style="left:458.5px;top:260.2px" width="43" height="26"><text transform="translate(0,20) scale(1,1.17)" font-family="Liberation Mono" font-size="16.25" fill="#262626">tq6,</text></svg>
<svg class="t" style="left:608.5px;top:260.2px" width="189.25" height="26"><text transform="translate(0,20) scale(1,1.17)" font-family="Liberation Mono" font-size="16.25" fill="#262626">*AmCreateIndexText6</text></svg>
<svg class="t" style="left:955.00px;top:261.30px" width="41.8" height="27.3" ><text class="cr" x="1.00" y="19.50" font-size="19.50" letter-spacing="-0.1" fill="#111">编号</text></svg><span class="h" style="left:956.0px;top:261.3px;width:38.8px;font-size:19.5px">编号</span>
<svg class="t" style="left:993.8px;top:260.2px" width="23.5" height="26"><text transform="translate(0,20) scale(1,1.17)" font-family="Liberation Mono" font-size="16.25" fill="#262626">+N</text></svg>
<svg class="t" style="left:458.5px;top:292.2px" width="43" height="26"><text transform="translate(0,20) scale(1,1.17)" font-family="Liberation Mono" font-size="16.25" fill="#262626">tq7,</text></svg>
<svg class="t" style="left:608.5px;top:292.2px" width="189.25" height="26"><text transform="translate(0,20) scale(1,1.17)" font-family="Liberation Mono" font-size="16.25" fill="#262626">*AmCreateIndexText7</text></svg>
<svg class="t" style="left:955.00px;top:293.30px" width="80.6" height="27.3" ><text class="cr" x="1.00" y="19.50" font-size="19.50" letter-spacing="-0.1" fill="#111">重新编号</text></svg><span class="h" style="left:956.0px;top:293.3px;width:77.6px;font-size:19.5px">重新编号</span>
<svg class="a" style="left:187px;top:127px" width="1731" height="745" viewBox="187 127 1731 745" fill="none" stroke-width="1" shape-rendering="crispEdges"><path d="M503.5 482.5 L1148.5 482.5 L1148.5 818.5 L503.5 818.5 Z" stroke="#b7cd5c"/><path d="M561.5 667.5 L561.5 565.5 L962.5 565.5 L962.5 667.5" stroke="#b7cd5c"/><path d="M568.5 667.5 L568.5 571.5 L956.5 571.5 L956.5 667.5" stroke="#b7cd5c"/><path d="M561.5 571.5 L568.5 571.5" stroke="#b7cd5c"/><path d="M956.5 571.5 L962.5 571.5" stroke="#b7cd5c"/><path d="M561.5 661.5 L671.5 661.5 L671.5 745.5 L842.5 745.5 L842.5 661.5 L962.5 661.5" stroke="#b7cd5c"/><path d="M561.5 667.5 L665.5 667.5 L665.5 752.5 L848.5 752.5 L848.5 667.5 L962.5 667.5" stroke="#b7cd5c"/><path d="M584.5 667.5 L584.5 665.5 L665.5 665.5" stroke="#b7cd5c"/><path d="M848.5 665.5 L930.5 665.5 L930.5 667.5" stroke="#b7cd5c"/><path d="M665.5 745.5 L671.5 745.5" stroke="#b7cd5c"/><path d="M842.5 745.5 L848.5 745.5" stroke="#b7cd5c"/><path d="M561.5 668.5 L561.5 752.5 L665.5 752.5" stroke="#e0262a"/><path d="M568.5 668.5 L568.5 745.5 L665.5 745.5" stroke="#e0262a"/><path d="M561.5 745.5 L568.5 745.5" stroke="#e0262a"/><path d="M563.5 684.5 L563.5 730.5" stroke="#e0262a"/><path d="M561.5 684.5 L563.5 684.5" stroke="#e0262a"/><path d="M561.5 730.5 L563.5 730.5" stroke="#e0262a"/><path d="M584.5 752.5 L584.5 750.5 L638.5 750.5 L638.5 752.5" stroke="#e0262a"/><path d="M962.5 668.5 L962.5 752.5 L848.5 752.5" stroke="#e0262a"/><path d="M956.5 668.5 L956.5 745.5 L848.5 745.5" stroke="#e0262a"/><path d="M956.5 745.5 L962.5 745.5" stroke="#e0262a"/><path d="M960.5 684.5 L960.5 730.5" stroke="#e0262a"/><path d="M960.5 684.5 L962.5 684.5" stroke="#e0262a"/><path d="M960.5 730.5 L962.5 730.5" stroke="#e0262a"/><path d="M875.5 752.5 L875.5 750.5 L930.5 750.5 L930.5 752.5" stroke="#e0262a"/><path d="M1001.3 608.5 L1006.0 600.4 L1020.2 600.4 L1025.8 608.5 L1025.8 616.0 L1020.2 623.6 L1006.0 623.6 L1001.3 631.1 L1001.3 645.4 L1025.8 645.4" stroke="#b7cd5c" stroke-width="1.15" shape-rendering="geometricPrecision" stroke-linejoin="round"/><path d="M1037.4 623.6 L1042.9 615.2 L1054.6 622.8 L1061.9 615.2" stroke="#b7cd5c" stroke-width="1.15" shape-rendering="geometricPrecision" stroke-linejoin="round"/><path d="M1073.1 608.5 L1078.1 600.4 L1092.4 600.4 L1097.1 608.5 L1097.1 616.0 L1092.4 623.6 L1084.0 623.6" stroke="#b7cd5c" stroke-width="1.15" shape-rendering="geometricPrecision" stroke-linejoin="round"/><path d="M1092.4 623.6 L1097.1 631.1 L1097.1 638.7 L1092.4 645.4 L1078.1 645.4 L1073.1 638.7" stroke="#b7cd5c" stroke-width="1.15" shape-rendering="geometricPrecision" stroke-linejoin="round"/><path d="M1133.5 600.4 L1109.2 600.4 L1109.2 645.4" stroke="#b7cd5c" stroke-width="1.15" shape-rendering="geometricPrecision" stroke-linejoin="round"/><path d="M1109.2 623.6 L1121.8 623.6" stroke="#b7cd5c" stroke-width="1.15" shape-rendering="geometricPrecision" stroke-linejoin="round"/><path d="M1001.3 692.4 L1007.7 684.3 L1007.7 729.3" stroke="#e0262a" stroke-width="1.15" shape-rendering="geometricPrecision" stroke-linejoin="round"/><path d="M1001.3 729.3 L1014.4 729.3" stroke="#e0262a" stroke-width="1.15" shape-rendering="geometricPrecision" stroke-linejoin="round"/><path d="M1049.6 684.3 L1025.8 684.3 L1025.8 729.3" stroke="#e0262a" stroke-width="1.15" shape-rendering="geometricPrecision" stroke-linejoin="round"/><path d="M1025.8 706.7 L1038.4 706.7" stroke="#e0262a" stroke-width="1.15" shape-rendering="geometricPrecision" stroke-linejoin="round"/><path d="M764.5 585.9 L762.2 588.2 L762.2 574.2" stroke="#dba3ad" stroke-width="1" shape-rendering="geometricPrecision" stroke-linejoin="round"/><path d="M765.1 574.2 L759.3 574.2" stroke="#dba3ad" stroke-width="1" shape-rendering="geometricPrecision" stroke-linejoin="round"/><path d="M582.5 612.3 L584.8 614.5 L584.8 619.0 L582.5 621.3 L580.1 621.3 L577.8 619.0 L577.8 614.5 L575.5 612.3 L570.8 612.3 L570.8 621.3" stroke="#dba3ad" stroke-width="1" shape-rendering="geometricPrecision" stroke-linejoin="round"/><path d="M612.1 647.3 L614.4 645.0 L618.9 645.0 L621.1 647.3 L621.1 649.7 L618.9 652.0 L616.6 652.0" stroke="#dba3ad" stroke-width="1" shape-rendering="geometricPrecision" stroke-linejoin="round"/><path d="M618.9 652.0 L621.1 654.3 L621.1 656.7 L618.9 659.0 L614.4 659.0 L612.1 656.7" stroke="#dba3ad" stroke-width="1" shape-rendering="geometricPrecision" stroke-linejoin="round"/><path d="M577.6 656.2 L579.9 654.0 L582.3 654.0 L584.6 656.2 L584.6 660.8 L582.3 663.0 L579.9 663.0 L577.6 660.8 L577.6 656.2 L575.3 654.0 L572.9 654.0 L570.6 656.2 L570.6 660.8 L572.9 663.0 L575.3 663.0 L577.6 660.8" stroke="#dba3ad" stroke-width="1" shape-rendering="geometricPrecision" stroke-linejoin="round"/><path d="M674.0 708.9 L688.0 708.9 L678.7 702.1 L678.7 711.1" stroke="#dba3ad" stroke-width="1" shape-rendering="geometricPrecision" stroke-linejoin="round"/><path d="M752.4 741.2 L754.6 743.5 L759.1 743.5 L761.4 741.2 L761.4 736.5 L759.1 734.2 L752.4 734.2 L752.4 729.5 L761.4 729.5" stroke="#dba3ad" stroke-width="1" shape-rendering="geometricPrecision" stroke-linejoin="round"/><path d="M826.0 703.4 L826.0 706.5 L830.7 711.0 L837.7 711.0 L840.0 708.8 L840.0 704.2 L837.7 702.0 L835.3 702.0 L833.0 704.2 L833.0 711.0" stroke="#dba3ad" stroke-width="1" shape-rendering="geometricPrecision" stroke-linejoin="round"/><path d="M898.0 645.1 L907.0 645.1 L900.2 659.1" stroke="#dba3ad" stroke-width="1" shape-rendering="geometricPrecision" stroke-linejoin="round"/><path d="M953.3 619.6 L953.3 616.5 L948.6 612.0 L941.6 612.0 L939.3 614.2 L939.3 618.8 L941.6 621.0 L944.0 621.0 L946.3 618.8 L946.3 612.0" stroke="#dba3ad" stroke-width="1" shape-rendering="geometricPrecision" stroke-linejoin="round"/><path d="M205.5 803.5 L205.5 853.5 L255.5 853.5" stroke="#fff"/><path d="M201.5 848.5 L210.5 848.5 L210.5 857.5 L201.5 857.5 Z" stroke="#fff"/><path d="M207.0 786.0 L213.3 792.3 L219.8 786.0" stroke="#fff" stroke-width="1" shape-rendering="geometricPrecision" stroke-linejoin="round"/><path d="M213.3 792.3 L213.3 799.0" stroke="#fff" stroke-width="1" shape-rendering="geometricPrecision" stroke-linejoin="round"/><path d="M260.0 839.0 L273.0 852.0" stroke="#fff" stroke-width="1" shape-rendering="geometricPrecision" stroke-linejoin="round"/><path d="M273.0 839.0 L260.0 852.0" stroke="#fff" stroke-width="1" shape-rendering="geometricPrecision" stroke-linejoin="round"/></svg>
<svg class="a" style="left:1770px;top:140px" width="140" height="140" viewBox="1770 140 140 140"><circle cx="1836" cy="208" r="52.5" fill="none" stroke="#2b2b2b" stroke-width="13.5"/><rect x="1810.5" y="182.5" width="51" height="51" fill="#9b9ba0"/><rect x="1820" y="192" width="32.5" height="31.5" fill="#8d8d97"/></svg>
<svg class="t" style="left:1819.50px;top:188.00px" width="34.0" height="43.4" ><text class="cr" x="1.00" y="31.00" font-size="31.00" fill="#4f4f55">上</text></svg><span class="h" style="left:1820.5px;top:188.0px;width:31.0px;font-size:31.0px">上</span>
<svg class="t" style="left:1825.50px;top:141.50px" width="22.0" height="26.6" ><text class="cr" x="1.00" y="19.00" font-size="19.00" fill="#c4c4c4" stroke="#c4c4c4" stroke-width="0.42">北</text></svg><span class="h" style="left:1826.5px;top:141.5px;width:19.0px;font-size:19.0px">北</span>
<svg class="t" style="left:1769.50px;top:197.00px" width="22.0" height="26.6" ><text class="cr" x="1.00" y="19.00" font-size="19.00" fill="#c4c4c4" stroke="#c4c4c4" stroke-width="0.42">西</text></svg><span class="h" style="left:1770.5px;top:197.0px;width:19.0px;font-size:19.0px">西</span>
<svg class="t" style="left:1881.50px;top:196.50px" width="22.0" height="26.6" ><text class="cr" x="1.00" y="19.00" font-size="19.00" fill="#c4c4c4" stroke="#c4c4c4" stroke-width="0.42">东</text></svg><span class="h" style="left:1882.5px;top:196.5px;width:19.0px;font-size:19.0px">东</span>
<svg class="t" style="left:1825.50px;top:253.00px" width="22.0" height="26.6" ><text class="cr" x="1.00" y="19.00" font-size="19.00" fill="#c4c4c4" stroke="#c4c4c4" stroke-width="0.42">南</text></svg><span class="h" style="left:1826.5px;top:253.0px;width:19.0px;font-size:19.0px">南</span>
<div style="left:1808px;top:296px;width:57px;height:17px;background:#90909b;border-radius:4px;border:1px solid #7b7b86"></div>
<svg class="t" style="left:1811.75px;top:297.60px" width="37.5" height="15.4" ><text class="cr" x="1.00" y="11.00" font-size="11.00" letter-spacing="0.5" fill="#6a6a74">未命名</text></svg><span class="h" style="left:1812.8px;top:297.6px;width:34.5px;font-size:11.0px">未命名</span>
<svg class="a" style="left:1853px;top:302px" width="7" height="4"><path d="M0 0h6L3 3.500z" fill="#6a6a74"/></svg>
<svg class="a" style="left:1883px;top:337px" width="33" height="214" viewBox="0 0 33 214" fill="none" stroke="#6b6b6b" stroke-width="1.3"><rect x="0.500" y="0.500" width="31.500" height="212" rx="4" fill="#404040" stroke="#4a4a4a"/><circle cx="26" cy="6" r="2.600" stroke="#5e5e5e"/><rect x="23" y="203" width="6" height="6" rx="1" stroke="#5e5e5e"/><path d="M5 32c0-9 6-13 12-13h10v12c0 8-5 13-11 13s-11-4-11-12z"/><circle cx="16" cy="31" r="6.500"/><path d="M14 49l2.500 3 2.500-3z M14 119l2.500 3 2.500-3z M14 158l2.500 3 2.500-3z" fill="#6b6b6b" stroke="none"/><path d="M3 57.500h27 M3 164.500h27" stroke="#4d4d4d" stroke-width="1"/><path transform="translate(4.500,60.500) scale(1.480)" stroke-width="0.900" d="M4.500 9.500L2.300 7.300c-1-1-2.300 0-1.500 1.200L4.500 14c0.800 1.200 2 1.700 3.500 1.700h1.500c2.500 0 3.700-1.500 4-3.500l1-6.500c0.200-1.300-1.500-1.600-1.800-0.300L12 8.500 12.200 2.800c0-1.300-1.800-1.400-1.900 0L10 7.500 9.600 1.600c-0.100-1.300-1.900-1.300-1.900 0L7.800 7.500 6.500 3c-0.300-1.300-2.100-0.900-1.800 0.400z"/><path d="M5 88l17 20 M19 88L5 107 M5 88v5M5 88h5 M19 88h-5M19 88v5 M5 107v-5M5 107h5 M27 112v-5M27 112h-5"/><circle cx="19" cy="104" r="4" fill="#404040"/><path d="M16 125l-4.500 6h3v14h3v-14h3z M4 140c2-4 22-4 24 0 2 4-22 5-24 0z M4 140l3-3M4 140l4 1"/><rect x="4.500" y="169.500" width="6" height="5.500"/><rect x="12.500" y="169.500" width="6" height="5.500"/><rect x="20.500" y="169.500" width="6" height="5.500"/><rect x="4.500" y="178.500" width="16" height="12"/><path d="M9 181v7l7-3.500z" fill="#6b6b6b"/></svg>
<svg class="a" style="left:187px;top:872px" width="220" height="16" viewBox="187 872 220 16"><rect x="187.500" y="873.500" width="13" height="13" fill="#f4f4f4" stroke="#d9d9d9"/><rect x="201.500" y="873.500" width="13" height="13" fill="#f4f4f4" stroke="#d9d9d9"/><rect x="215.500" y="873.500" width="13" height="13" fill="#f4f4f4" stroke="#d9d9d9"/><rect x="229.500" y="873.500" width="13" height="13" fill="#f4f4f4" stroke="#d9d9d9"/><path d="M191.500 876v8 M199 876v8l-5.500-4z M213 876v8l-5.500-4z M219 876v8l5.500-4z M233 876v8l5.500-4z M240 876v8" fill="#7e7e7e" stroke="#7e7e7e" stroke-width="1"/><path d="M243.500 872h45.500l-5.500 15h-35z" fill="#000"/><path d="M334.500 872.500l-5.500 14.500 M381 872.500l-5.500 14.500 M289 887.500h40 M335 887.500h40" stroke="#777" stroke-width="1" fill="none"/></svg>
<svg class="t" style="left:253.00px;top:872.00px" width="27.0" height="16.8" ><text class="cs" x="1.00" y="12.00" font-size="12.00" fill="#fff">模型</text></svg>
<svg class="t" style="left:253.40px;top:872.00px" width="27.0" height="16.8" ><text class="cs" x="1.00" y="12.00" font-size="12.00" fill="#fff">模型</text></svg><span class="h" style="left:254.4px;top:872.0px;width:24.0px;font-size:12.0px">模型</span>
<svg class="t" style="left:293.00px;top:872.00px" width="33.6" height="16.8" ><text class="cs" x="1.00" y="12.00" font-size="12.00" fill="#111">布局</text><text x="25.00" y="12.00" font-family="Liberation Mono" font-size="11.00" fill="#111">1</text></svg><span class="h" style="left:294.0px;top:872.0px;width:30.6px;font-size:12.0px">布局1</span>
<svg class="t" style="left:339.00px;top:872.00px" width="33.6" height="16.8" ><text class="cs" x="1.00" y="12.00" font-size="12.00" fill="#111">布局</text><text x="25.00" y="12.00" font-family="Liberation Mono" font-size="11.00" fill="#111">2</text></svg><span class="h" style="left:340.0px;top:872.0px;width:30.6px;font-size:12.0px">布局2</span>
<div style="left:0px;top:889px;width:1921px;height:4px;background:linear-gradient(#757575,#5c5c5c)"></div>
<div style="left:0px;top:917px;width:1921px;height:3px;background:#606060"></div>
<div style="left:0px;top:893px;width:601px;height:24px;background:#656565;border:1px solid #3a3a3a"></div><div style="left:9px;top:894px;width:591px;height:22px;background:#efefef"></div><svg class="ic" style="left:12px;top:897px" width="16" height="16" viewBox="0 0 16 16"><path d="M0.300 11.500L5 0.500 9.600 11.500 M2 7.800H8" fill="none" stroke="#16181c" stroke-width="1.7" /><path d="M3.0 15.600 Q9.100 15.700 10.300 11.900 L8.700 9.700 Q5.300 10.500 3.0 15.600z" fill="#9a5424" /><path d="M9.500 10.800L15.900 5.0" fill="none" stroke="#6a3c14" stroke-width="2" /><path d="M9.500 10.800L15.900 5.0" fill="none" stroke="#f6efe6" stroke-width="0.7" /></svg><div style="left:33px;top:895px;width:119px;height:20px;background:linear-gradient(#ffffff 0%,#f3f3f3 40%,#e2e2e2 60%,#d0d0d0 100%);border:1px solid #9c9c9c;border-radius:4px;box-shadow:inset 0 0 0 1px rgba(255,255,255,.6)"></div><svg class="a" style="left:141px;top:903px" width="7" height="4" viewBox="0 0 7 4"><path d="M0 0h7L3.500 4z" fill="#111"/></svg><svg class="t" style="left:50.00px;top:896.60px" width="61.8" height="16.8" ><text x="1.00" y="12.00" font-family="Liberation Sans" font-size="12.60" fill="#111">EH-MX-10</text></svg><div style="left:154px;top:896px;width:1.4px;height:18px;background:#1c1c1c"></div><svg class="ic" style="left:161px;top:897px" width="16" height="16" viewBox="0 0 16 16"><path d="M1.500 8.200V14.800 M16.400 8.200V14.800 M1.500 11.500H16.400" fill="none" stroke="#2c2c2c" stroke-width="1.2" /><path d="M1.800 11.500l2.600 -1.500v3z M16.100 11.500l-2.600 -1.500v3z" fill="#2c2c2c" /><path d="M5.300 9.700 Q11.200 10.300 12.500 6.700 L11.100 4.300 Q7.700 4.900 5.300 9.700z" fill="#9a5424" /><path d="M11.800 5.500L16.600 0.200" fill="none" stroke="#6a3c14" stroke-width="2" /><path d="M11.800 5.500L16.600 0.200" fill="none" stroke="#f6efe6" stroke-width="0.7" /></svg><div style="left:182px;top:895px;width:119px;height:20px;background:linear-gradient(#ffffff 0%,#f3f3f3 40%,#e2e2e2 60%,#d0d0d0 100%);border:1px solid #9c9c9c;border-radius:4px;box-shadow:inset 0 0 0 1px rgba(255,255,255,.6)"></div><svg class="a" style="left:290px;top:903px" width="7" height="4" viewBox="0 0 7 4"><path d="M0 0h7L3.500 4z" fill="#111"/></svg><svg class="t" style="left:200.00px;top:896.60px" width="54.1" height="16.8" ><text x="1.00" y="12.00" font-family="Liberation Sans" font-size="12.60" fill="#111">MX1-100</text></svg><div style="left:303px;top:896px;width:1.4px;height:18px;background:#1c1c1c"></div><svg class="ic" style="left:310px;top:897px" width="16" height="16" viewBox="0 0 16 16"><rect x="1.300" y="1.400" width="12.300" height="11.300" rx="0.800" fill="#fcfcfc" stroke="#333" stroke-width="1.200"/><rect x="1.900" y="2" width="11.100" height="1.800" fill="#8a8f98"/><path d="M1.300 4.300H13.600 M1.300 7H13.600 M1.300 9.800H13.600 M5.300 4.300V12.700 M9.500 4.300V12.700" fill="none" stroke="#b4b8c0" stroke-width="0.9" /><path d="M4.100 15.600 Q10.400 15.600 11.800 11.700 L10.200 9.500 Q6.600 10.400 4.100 15.600z" fill="#9a5424" /><path d="M11.0 10.600L16.300 6.500" fill="none" stroke="#6a3c14" stroke-width="2" /><path d="M11.0 10.600L16.300 6.500" fill="none" stroke="#f6efe6" stroke-width="0.7" /></svg><div style="left:331px;top:895px;width:119px;height:20px;background:linear-gradient(#ffffff 0%,#f3f3f3 40%,#e2e2e2 60%,#d0d0d0 100%);border:1px solid #9c9c9c;border-radius:4px;box-shadow:inset 0 0 0 1px rgba(255,255,255,.6)"></div><svg class="a" style="left:439px;top:903px" width="7" height="4" viewBox="0 0 7 4"><path d="M0 0h7L3.500 4z" fill="#111"/></svg><svg class="t" style="left:334.00px;top:896.60px" width="54.1" height="16.8" ><text x="1.00" y="12.00" font-family="Liberation Sans" font-size="12.60" fill="#111">Standard</text></svg><div style="left:452px;top:896px;width:1.4px;height:18px;background:#1c1c1c"></div><svg class="ic" style="left:459px;top:897px" width="16" height="16" viewBox="0 0 16 16"><path d="M9.500 3.500H6.100L2.300 12.500" fill="none" stroke="#2a2f3a" stroke-width="1.3" /><path d="M1.300 15L1.500 10.200 4.800 11.600z" fill="#2a2f3a" /><path d="M4.200 15.600 Q10.600 15.800 12.300 12.0 L10.700 9.600 Q7.100 10.400 4.200 15.600z" fill="#9a5424" /><path d="M11.500 10.800L16.300 5.400" fill="none" stroke="#6a3c14" stroke-width="2" /><path d="M11.500 10.800L16.300 5.400" fill="none" stroke="#f6efe6" stroke-width="0.7" /><circle cx="12.600" cy="3.600" r="3.100" fill="#f4f4f6" stroke="#2a2f3a" stroke-width="1.200"/></svg><div style="left:480px;top:895px;width:119px;height:20px;background:linear-gradient(#ffffff 0%,#f3f3f3 40%,#e2e2e2 60%,#d0d0d0 100%);border:1px solid #9c9c9c;border-radius:4px;box-shadow:inset 0 0 0 1px rgba(255,255,255,.6)"></div><svg class="a" style="left:588px;top:903px" width="7" height="4" viewBox="0 0 7 4"><path d="M0 0h7L3.500 4z" fill="#111"/></svg><svg class="t" style="left:498.00px;top:896.60px" width="54.1" height="16.8" ><text x="1.00" y="12.00" font-family="Liberation Sans" font-size="12.60" fill="#111">Standard</text></svg>
<div style="left:601px;top:893px;width:106px;height:24px;background:#656565;border:1px solid #3a3a3a"></div><div style="left:609px;top:894px;width:97px;height:22px;background:#efefef"></div><svg class="ic" style="left:612px;top:897px" width="16" height="16" viewBox="0 0 16 16"><path d="M0.500 3V7.600 M14.600 3V7.600 M0.500 5.300H14.600" fill="none" stroke="#2c2c2c" stroke-width="1.2" /><path d="M0.800 5.300l2.600 -1.500v3z M14.300 5.300l-2.600 -1.500v3z" fill="#2c2c2c" /><rect x="0.400" y="9.200" width="14.200" height="3.400" rx="1.400" fill="#f4bc1c" stroke="#5a4208" stroke-width="0.900"/><path d="M2.500 9.500v1.500 M4.500 9.500v1.500 M6.500 9.500v1.500 M8.500 9.500v1.500 M10.500 9.500v1.500 M12.500 9.500v1.500" fill="none" stroke="#b03020" stroke-width="0.8" /><path d="M16 12V16H12z" fill="#111" /></svg><svg class="ic" style="left:635px;top:897px" width="16" height="16" viewBox="0 0 16 16"><path d="M0.600 10.400V3.200L4 0.300L12.600 4.600 M0.600 10.400H7.500" fill="none" stroke="#333" stroke-width="1.2" /><path d="M1.200 9.800V4L4 1.500 8 3.500V9.800z" fill="#dfe2e6" /><rect x="8.500" y="6.300" width="7" height="9" rx="1" fill="#eef4fa" stroke="#2c4466" stroke-width="1.200"/><rect x="10" y="8" width="4" height="1.600" fill="#3a5a90"/><path d="M10 12.300h3.500 M12.300 10.900l1.500 1.400-1.500 1.400" fill="none" stroke="#2c4466" stroke-width="1" /></svg><div style="left:657px;top:896px;width:1.4px;height:18px;background:#1c1c1c"></div><svg class="ic" style="left:664px;top:897px" width="16" height="16" viewBox="0 0 16 16"><path d="M4.400 3.300C3.200 6 6.200 9 4.700 12.700H12.600C14.100 9 11.100 6 12.300 3.300z" fill="#f4f5f7" stroke="#2c3038" stroke-width="1.1" /><rect x="3.200" y="0.700" width="12.200" height="2.700" rx="1.350" fill="#f4f5f7" stroke="#2c3038" stroke-width="1.100"/><rect x="1.400" y="12.600" width="12.200" height="2.700" rx="1.350" fill="#f4f5f7" stroke="#2c3038" stroke-width="1.100"/><path d="M6.300 5.500H11 M6.800 7.800H11.800 M6.500 10.200H11.300" fill="none" stroke="#4a4f5a" stroke-width="0.9" /></svg><svg class="ic" style="left:687px;top:897px" width="16" height="16" viewBox="0 0 16 16"><path d="M1.600 1.500V14.300H14" fill="none" stroke="#363636" stroke-width="1.2" /><path d="M0.200 3.200L1.600 0.300 3 3.200z M12.500 12.800L15.500 14.300 12.500 15.800z" fill="#363636" /><path d="M1.600 14.300L8 7.800" fill="none" stroke="#363636" stroke-width="1" /><circle cx="10.500" cy="5.200" r="3.500" fill="#f4f4f6" stroke="#333" stroke-width="1.200"/><circle cx="10.500" cy="5.200" r="0.700" fill="#333"/><path d="M13 7.800L15.300 10.200" fill="none" stroke="#333" stroke-width="2.2" /></svg>
<div style="left:707px;top:893px;width:155px;height:24px;background:#656565;border:1px solid #3a3a3a"></div><div style="left:717px;top:894px;width:144px;height:22px;background:#efefef"></div><svg class="ic" style="left:720px;top:897px" width="16" height="16" viewBox="0 0 16 16"><defs><linearGradient id="dog" x1="0" y1="0" x2="0" y2="1"><stop offset="0" stop-color="#8a9098"/><stop offset="1" stop-color="#cdd1d8"/></linearGradient></defs><rect x="0.500" y="0.500" width="10.300" height="5.700" fill="#f8f9fb" stroke="#333" stroke-width="1.100"/><rect x="5.600" y="9.400" width="10" height="6" fill="#f8f9fb" stroke="#333" stroke-width="1.100"/><rect x="3.600" y="4.600" width="8.800" height="6.400" fill="url(#dog)" stroke="#333" stroke-width="1.100"/></svg><svg class="ic" style="left:743px;top:897px" width="16" height="16" viewBox="0 0 16 16"><defs><linearGradient id="dog" x1="0" y1="0" x2="0" y2="1"><stop offset="0" stop-color="#8a9098"/><stop offset="1" stop-color="#cdd1d8"/></linearGradient></defs><rect x="3.900" y="4.600" width="8.800" height="6.400" fill="url(#dog)" stroke="#333" stroke-width="1.100"/><rect x="0.500" y="0.500" width="10.200" height="5.700" fill="#f8f9fb" stroke="#333" stroke-width="1.100"/><rect x="5.500" y="9.400" width="10" height="6" fill="#f8f9fb" stroke="#333" stroke-width="1.100"/></svg><svg class="ic" style="left:766px;top:897px" width="16" height="16" viewBox="0 0 16 16"><defs><linearGradient id="dog" x1="0" y1="0" x2="0" y2="1"><stop offset="0" stop-color="#8a9098"/><stop offset="1" stop-color="#cdd1d8"/></linearGradient></defs><rect x="0.500" y="1.400" width="11.300" height="8" fill="#f8f9fb" stroke="#333" stroke-width="1.100"/><rect x="4.500" y="6.600" width="10.900" height="7.600" fill="url(#dog)" stroke="#333" stroke-width="1.100"/></svg><svg class="ic" style="left:789px;top:897px" width="16" height="16" viewBox="0 0 16 16"><defs><linearGradient id="dog" x1="0" y1="0" x2="0" y2="1"><stop offset="0" stop-color="#8a9098"/><stop offset="1" stop-color="#cdd1d8"/></linearGradient></defs><rect x="4.400" y="6.600" width="11.100" height="7.600" fill="url(#dog)" stroke="#333" stroke-width="1.100"/><rect x="0.500" y="1.400" width="11.100" height="8" fill="#f8f9fb" stroke="#333" stroke-width="1.100"/></svg><div style="left:811px;top:896px;width:1.4px;height:18px;background:#1c1c1c"></div><svg class="ic" style="left:818px;top:897px" width="16" height="16" viewBox="0 0 16 16"><text x="1.400" y="7" font-family="Liberation Mono" font-size="6.8" font-weight="bold" fill="#111">ABC</text><path d="M4.500 7.500V12.200H15.200V4.600H13.500" fill="none" stroke="#333" stroke-width="1.1" /><path d="M17 12V15.800H13.200z" fill="#111" /></svg><svg class="ic" style="left:841px;top:897px" width="16" height="16" viewBox="0 0 16 16"><defs><linearGradient id="dog" x1="0" y1="0" x2="0" y2="1"><stop offset="0" stop-color="#8a9098"/><stop offset="1" stop-color="#cdd1d8"/></linearGradient></defs><rect x="1.500" y="0.500" width="11.200" height="7.300" fill="url(#dog)" stroke="#333" stroke-width="1.100"/><path d="M15.400 4.500V14 M7 13.800H16" fill="none" stroke="#333" stroke-width="1.1" /><path d="M14 5.800L15.400 3.500 16.800 5.800z M14 12L15.400 14.300 16.800 12z M8.500 12.400L6.300 13.800 8.500 15.200z" fill="#333" /><path d="M10 12.500l3-3 M12 12.800l3-3 M10.500 9.800l1.500-1" fill="none" stroke="#555" stroke-width="0.8" /></svg>
<div style="left:0px;top:920px;width:642px;height:24px;background:#656565;border:1px solid #3a3a3a"></div><div style="left:9px;top:921px;width:632px;height:22px;background:#efefef"></div><svg class="ic" style="left:12px;top:924px" width="16" height="16" viewBox="0 0 16 16"><path d="M0.500 0.900V15 M15.600 0.900V15 M0.500 5H15.600" fill="none" stroke="#2c2c2c" stroke-width="1.3" /><path d="M0.800 5l2.800-1.500v3z M15.300 5l-2.800-1.500v3z" fill="#2c2c2c" /></svg><svg class="ic" style="left:35px;top:924px" width="16" height="16" viewBox="0 0 16 16"><path d="M0.300 5.600L5.800 0.300 M10.200 15.300L15.800 10 M3.400 3.400L12.800 12.300" fill="none" stroke="#2c2c2c" stroke-width="1.2" /><path d="M3.400 3.400l3 0.800-2.200 2.200z M12.800 12.300l-3-0.800 2.200-2.200z" fill="#2c2c2c" /></svg><svg class="ic" style="left:58px;top:924px" width="16" height="16" viewBox="0 0 16 16"><path d="M1.500 13.500C2.500 7.500 7 2.800 13.200 1.500" fill="none" stroke="#777" stroke-width="1.1" /><path d="M6 14.300C6.500 10 9.500 6.500 14.500 5.300" fill="none" stroke="#2c2c2c" stroke-width="1.3" /><path d="M5.800 15.800L4.300 12.800 7.500 13z M15.900 5L13 3.800 13.300 7z" fill="#2c2c2c" /><rect x="0.300" y="13.300" width="2.600" height="2.600" fill="#fff" stroke="#111" stroke-width="1.100"/><rect x="13.200" y="0.300" width="2.600" height="2.600" fill="#fff" stroke="#111" stroke-width="1.100"/></svg><svg class="ic" style="left:81px;top:924px" width="16" height="16" viewBox="0 0 16 16"><text x="4.300" y="3.500" font-family="Liberation Sans" font-size="5" font-weight="bold" fill="#2a70b4">0</text><text x="12" y="3.500" font-family="Liberation Sans" font-size="5" font-weight="bold" fill="#2a70b4">X</text><text x="0" y="8.500" font-family="Liberation Sans" font-size="5" font-weight="bold" fill="#2a70b4">Y</text><text x="0" y="15.500" font-family="Liberation Sans" font-size="5" font-weight="bold" fill="#2a70b4">0</text><path d="M5.400 15V5.500L11.500 10H15.700 M4.500 14.700H15.700 M11.300 10V15.200 M14.500 5.500V8.500L13 10" fill="none" stroke="#2c2c2c" stroke-width="1.1" /><path d="M4 7.500L5.400 5 6.800 7.500z M6.500 13.500L4.200 14.700 6.500 15.900z" fill="#2c2c2c" /></svg><div style="left:103px;top:923px;width:1.4px;height:18px;background:#1c1c1c"></div><svg class="ic" style="left:110px;top:924px" width="16" height="16" viewBox="0 0 16 16"><defs><radialGradient id="drg" cx="70%" cy="30%" r="70%"><stop offset="0" stop-color="#d8d8d8"/><stop offset="1" stop-color="#f4f4f4"/></radialGradient></defs><circle cx="8.600" cy="8.400" r="7.200" fill="url(#drg)" stroke="#333" stroke-width="1.200"/><path d="M9 8.800L5 5" fill="none" stroke="#2c2c2c" stroke-width="1.2" /><path d="M3.800 3.800L7.300 4.700 4.700 7.300z" fill="#2c2c2c" /></svg><svg class="ic" style="left:133px;top:924px" width="16" height="16" viewBox="0 0 16 16"><path d="M0.400 4.500C3.500-0.500 14.500 1.500 14.700 10.600" fill="none" stroke="#2c2c2c" stroke-width="1.3" /><path d="M4 15.600L9.700 10.300 6.300 8.100 9.800 4.800" fill="none" stroke="#2c2c2c" stroke-width="1.2" /><path d="M11 3.600L10.500 7.200 7.700 4.300z" fill="#2c2c2c" /></svg><svg class="ic" style="left:156px;top:924px" width="16" height="16" viewBox="0 0 16 16"><defs><radialGradient id="ddg" cx="60%" cy="25%" r="70%"><stop offset="0" stop-color="#d2d2d2"/><stop offset="1" stop-color="#f4f4f4"/></radialGradient></defs><circle cx="7.900" cy="7.900" r="7.400" fill="url(#ddg)" stroke="#333" stroke-width="1.200"/><path d="M3.800 3.900L12.200 12" fill="none" stroke="#2c2c2c" stroke-width="1.2" /><path d="M2.700 2.800L6.200 3.600 3.600 6.300z M13.200 13L9.800 12.200 12.400 9.600z" fill="#2c2c2c" /></svg><svg class="ic" style="left:179px;top:924px" width="16" height="16" viewBox="0 0 16 16"><path d="M0.300 15.300H15.600 M0.300 9.700L9.600 0.300" fill="none" stroke="#2c2c2c" stroke-width="1.2" /><path d="M8.800 3.500C11.500 6 12.800 9.500 13 13.500" fill="none" stroke="#2c2c2c" stroke-width="1.2" /><path d="M7.600 2.300L11 3.200 8.600 5.600z M13 15.200L11.400 12.200 14.600 12.200z" fill="#2c2c2c" /></svg><div style="left:201px;top:923px;width:1.4px;height:18px;background:#1c1c1c"></div><svg class="ic" style="left:208px;top:924px" width="16" height="16" viewBox="0 0 16 16"><path d="M0.600 0.300V13.800 M15.600 0.300V13.800 M0.600 4.400H15.600" fill="none" stroke="#2c2c2c" stroke-width="1.3" /><path d="M0.900 4.400l2.800-1.500v3z M15.300 4.400l-2.800-1.500v3z" fill="#2c2c2c" /><path d="M9.500 6.500L5 10.800H8L5.800 15.200 11 10H8z" fill="#f6a61c" /><path d="M9.500 6.500L5 10.800H8L5.800 15.200 11 10H8z" fill="none" stroke="#d88010" stroke-width="0.5" /></svg><svg class="ic" style="left:231px;top:924px" width="16" height="16" viewBox="0 0 16 16"><path d="M0.800 1.200V14.800 M0.800 5.300H13.500 M0.800 11.600H10.400 M10.400 8.400V14.800" fill="none" stroke="#2c2c2c" stroke-width="1.3" /><path d="M1.100 5.300l2.600-1.500v3z M15.200 5.300l-2.800-1.600v3.200z M1.100 11.600l2.600-1.500v3z M10.100 11.600l-2.600-1.500v3z" fill="#2c2c2c" /></svg><svg class="ic" style="left:254px;top:924px" width="16" height="16" viewBox="0 0 16 16"><path d="M1.500 0.900V14.800 M8.600 0.900V14.800 M15.500 0.900V14.800 M1.500 5H15.500" fill="none" stroke="#2c2c2c" stroke-width="1.3" /><path d="M1.800 5l2.200-1.400v2.800z M8.300 5l-2.200-1.400v2.800z M8.900 5l2.200-1.400v2.800z M15.200 5l-2.200-1.400v2.800z" fill="#2c2c2c" /></svg><svg class="ic" style="left:277px;top:924px" width="16" height="16" viewBox="0 0 16 16"><path d="M0.700 -0.100V3.900 M15.600 -0.100V3.900 M0.700 1.900H15.600" fill="none" stroke="#2c2c2c" stroke-width="1.2" /><path d="M1 1.900l2.600 -1.500v3z M15.300 1.900l-2.600 -1.500v3z" fill="#2c2c2c" /><path d="M0.700 11.800V15.800 M15.600 11.800V15.800 M0.700 13.800H15.600" fill="none" stroke="#2c2c2c" stroke-width="1.2" /><path d="M1 13.800l2.600 -1.500v3z M15.300 13.800l-2.600 -1.500v3z" fill="#2c2c2c" /><path d="M5.400 5V11" fill="none" stroke="#111" stroke-width="1.3" /><path d="M3.900 6.200L5.400 4 6.900 6.200z M3.900 9.800L5.400 12 6.900 9.800z" fill="#111" /><rect x="8.200" y="4" width="3.700" height="7.700" fill="#f6c020" stroke="#8a6a08" stroke-width="0.800"/><path d="M9.800 5.500h2 M9.800 7.800h2 M9.800 10h2" fill="none" stroke="#6a4a08" stroke-width="0.8" /></svg><svg class="ic" style="left:300px;top:924px" width="16" height="16" viewBox="0 0 16 16"><path d="M0.300 5.300H4.800 M8 5.300H14.500 M14.600 2V8.600" fill="none" stroke="#8c8c8c" stroke-width="1.1" /><path d="M14.300 5.300L11.500 3.700V6.900z" fill="#8c8c8c" /><path d="M6.400 0.300V12 M3.300 14.700H9.900" fill="none" stroke="#2c2c2c" stroke-width="1.3" /><path d="M4.600 11L6.400 14.500 8.200 11z" fill="#2c2c2c" /></svg><div style="left:322px;top:923px;width:1.4px;height:18px;background:#1c1c1c"></div><svg class="ic" style="left:329px;top:924px" width="16" height="16" viewBox="0 0 16 16"><rect x="0.400" y="2.500" width="15.200" height="11" rx="0.800" fill="#fbfbfb" stroke="#333" stroke-width="1.200"/><path d="M8.400 2.500V13.500" fill="none" stroke="#333" stroke-width="1.1" /><circle cx="4.400" cy="8" r="2" fill="none" stroke="#111" stroke-width="1.100"/><path d="M4.400 4.300V11.700 M0.900 8H7.900" fill="none" stroke="#111" stroke-width="1.2" /><text x="9" y="12" font-family="Liberation Sans" font-size="8" font-weight="bold" fill="#111">.1</text></svg><svg class="ic" style="left:352px;top:924px" width="16" height="16" viewBox="0 0 16 16"><circle cx="8.500" cy="8.400" r="7.200" fill="#f8f8f8" stroke="#444" stroke-width="1"/><path d="M8.500 6V10.800 M6.100 8.400H10.900" fill="none" stroke="#111" stroke-width="1.3" /></svg><svg class="ic" style="left:375px;top:924px" width="16" height="16" viewBox="0 0 16 16"><path d="M0.500 1.200V14.700 M15.200 1.200V14.700 M0.500 5.200H15.200" fill="none" stroke="#2c2c2c" stroke-width="1.3" /><path d="M0.800 5.200l2.600-1.500v3z M14.900 5.200l-2.600-1.500v3z" fill="#2c2c2c" /><path d="M4 11.500L7 14.800 12.200 8.500" fill="none" stroke="#4a9a28" stroke-width="2.3" /></svg><svg class="ic" style="left:398px;top:924px" width="16" height="16" viewBox="0 0 16 16"><path d="M2 7.800H3.500L7.900 1.900 11.900 14.300 15.500 7" fill="none" stroke="#3a3a3a" stroke-width="1.3" stroke-linejoin="round"/><path d="M0.200 7.800L3 5.800V9.800z" fill="#222" /></svg><div style="left:420px;top:923px;width:1.4px;height:18px;background:#1c1c1c"></div><svg class="ic" style="left:427px;top:924px" width="16" height="16" viewBox="0 0 16 16"><path d="M0.500 6.900V14.900 M15.300 6.900V14.900 M0.500 10.900H15.300" fill="none" stroke="#2c2c2c" stroke-width="1.2" /><path d="M0.800 10.900l2.600 -1.500v3z M15 10.900l-2.600 -1.500v3z" fill="#2c2c2c" /><path d="M6.594 9.277L13.4085 2.2855L11.5915 0.5145L4.777 7.506z" fill="#f6c63a" /><path d="M6.594 9.277L13.4085 2.2855L11.5915 0.5145L4.777 7.506z" fill="none" stroke="#9a6a10" stroke-width="0.7" /><path d="M4.800 9.300L6.594 9.277L4.777 7.506z" fill="#f4e4c8" /><path d="M4.800 9.300L6.594 9.277L4.777 7.506z" fill="none" stroke="#6a4a10" stroke-width="0.6" /></svg><svg class="ic" style="left:450px;top:924px" width="16" height="16" viewBox="0 0 16 16"><path d="M0.700 8.100V16.100 M15.300 8.100V16.100 M0.700 12.100H15.300" fill="none" stroke="#2c2c2c" stroke-width="1.2" /><path d="M1 12.100l2.600 -1.500v3z M15 12.100l-2.600 -1.500v3z" fill="#2c2c2c" /><path d="M4.400 8.800L8.200 0.800 12 8.800 M5.800 6H10.600" fill="none" stroke="#2a2a2a" stroke-width="1.5" /></svg><svg class="ic" style="left:473px;top:924px" width="16" height="16" viewBox="0 0 16 16"><path d="M0.700 0.500V13.600 M15.300 0.500V13.600 M0.700 4.100H15.300" fill="none" stroke="#2c2c2c" stroke-width="1.3" /><path d="M1 4.100l2.600-1.500v3z M15 4.100l-2.600-1.500v3z" fill="#2c2c2c" /><path d="M12.600 10.300A2.700 2.700 0 0 0 7.800 10.500 M7.800 13A2.700 2.700 0 0 0 12.600 13.200" fill="none" stroke="#3c8a2a" stroke-width="1.4" /><path d="M6.500 9.700L9.600 10 8 12z M13.900 13.900L10.800 13.600 12.400 11.600z" fill="#3c8a2a" /></svg><div style="left:495px;top:923px;width:1.4px;height:18px;background:#1c1c1c"></div><div style="left:500px;top:922px;width:119px;height:20px;background:linear-gradient(#ffffff 0%,#f3f3f3 40%,#e2e2e2 60%,#d0d0d0 100%);border:1px solid #9c9c9c;border-radius:4px;box-shadow:inset 0 0 0 1px rgba(255,255,255,.6)"></div><svg class="a" style="left:608px;top:930px" width="7" height="4" viewBox="0 0 7 4"><path d="M0 0h7L3.500 4z" fill="#111"/></svg><svg class="t" style="left:518.00px;top:923.60px" width="54.1" height="16.8" ><text x="1.00" y="12.00" font-family="Liberation Sans" font-size="12.60" fill="#111">MX1-100</text></svg><svg class="ic" style="left:622px;top:924px" width="16" height="16" viewBox="0 0 16 16"><path d="M1.500 8.200V14.800 M16.400 8.200V14.800 M1.500 11.500H16.400" fill="none" stroke="#2c2c2c" stroke-width="1.2" /><path d="M1.800 11.500l2.600 -1.500v3z M16.100 11.500l-2.600 -1.500v3z" fill="#2c2c2c" /><path d="M5.300 9.700 Q11.200 10.300 12.500 6.700 L11.100 4.300 Q7.700 4.900 5.300 9.700z" fill="#9a5424" /><path d="M11.800 5.500L16.600 0.200" fill="none" stroke="#6a3c14" stroke-width="2" /><path d="M11.800 5.500L16.600 0.200" fill="none" stroke="#f6efe6" stroke-width="0.7" /></svg>
<div style="left:642px;top:920px;width:402px;height:24px;background:#656565;border:1px solid #3a3a3a"></div><div style="left:652px;top:921px;width:391px;height:22px;background:#efefef"></div><svg class="ic" style="left:655px;top:924px" width="16" height="16" viewBox="0 0 16 16"><path d="M0.500 4.500L4.500 1H12.500L10.500 3 M0.500 8L3.500 5H9 M0.500 11.500L3.500 8.500H8.500 M0.500 11.500H8" fill="none" stroke="#333" stroke-width="1.1" /><path d="M9 2.800L12.500 0.800" fill="none" stroke="#333" stroke-width="1" /><rect x="8.600" y="6.600" width="7" height="9" rx="1" fill="#eef4fa" stroke="#2c4466" stroke-width="1.200"/><rect x="10.100" y="8.300" width="4" height="1.600" fill="#3a5a90"/><path d="M10.100 12.600h3.500 M12.400 11.200l1.500 1.400-1.500 1.400" fill="none" stroke="#2c4466" stroke-width="1" /></svg><div style="left:676px;top:922px;width:298px;height:20px;background:linear-gradient(#ffffff 0%,#f3f3f3 40%,#e2e2e2 60%,#d0d0d0 100%);border:1px solid #9c9c9c;border-radius:4px;box-shadow:inset 0 0 0 1px rgba(255,255,255,.6)"></div><svg class="a" style="left:963px;top:930px" width="7" height="4" viewBox="0 0 7 4"><path d="M0 0h7L3.500 4z" fill="#111"/></svg><svg class="t" style="left:760.50px;top:924.40px" width="37.3" height="16.8" ><text x="1.00" y="12.00" font-family="Liberation Sans" font-size="12.60" fill="#111">layer1</text></svg><svg class="ic" style="left:978px;top:924px" width="16" height="16" viewBox="0 0 16 16"><path d="M0.500 14.700L5 10.200H15.400L10.800 14.700z" fill="#fbfbfb" stroke="#333" stroke-width="1.1" /><path d="M0.500 11.700L5 7.200H15.400L10.800 11.700z" fill="#fbfbfb" stroke="#333" stroke-width="1.1" /><path d="M0.500 8.400L5 3.300H15.400L10.800 8.400z" fill="#bfe0f7" stroke="#1f5fa8" stroke-width="1.2" /><circle cx="7.900" cy="2.900" r="2.800" fill="#d4eafa" stroke="#1f5fa8" stroke-width="1.100"/></svg><svg class="ic" style="left:1001px;top:924px" width="16" height="16" viewBox="0 0 16 16"><path d="M3.800 15.500L7.800 11.500H15.800L11.800 15.500z" fill="#fbfbfb" stroke="#333" stroke-width="1.1" /><path d="M3.800 12L7.800 8H15.800L11.800 12z" fill="#fbfbfb" stroke="#333" stroke-width="1.1" /><path d="M3.800 8.500L7.800 4.500H15.800L11.800 8.500z" fill="#fbfbfb" stroke="#333" stroke-width="1.1" /><path d="M2.500 2.300H5C6.500 2.300 7.300 3.200 7.300 4.500" fill="none" stroke="#111" stroke-width="1.3" /><path d="M0.600 2.300L3.400 0.400V4.200z" fill="#111" /></svg><svg class="ic" style="left:1024px;top:924px" width="16" height="16" viewBox="0 0 16 16"><path d="M0.500 4.500L4.500 0.500H13.200L9.200 4.500z M0.500 8L3.500 5 M0.500 11.500L3.500 8.500 M0.500 8H7 M0.500 11.500H7 M10.500 5L12.500 3 M11.500 6.800L12.800 5.500" fill="none" stroke="#333" stroke-width="1.1" /><rect x="7.600" y="8.200" width="8" height="7.300" rx="0.800" fill="#f6f6f8" stroke="#333a4a" stroke-width="1.100"/><path d="M7.600 8.200h8v1.800h-8z" fill="#333a4a" /><path d="M9.100 11.900h1.200 M11.600 11.900h2.800 M9.100 13.700h1.200 M11.600 13.700h2.800" fill="none" stroke="#4a5468" stroke-width="0.9" /></svg>
<div style="left:1044px;top:920px;width:584px;height:24px;background:#656565;border:1px solid #3a3a3a"></div><div style="left:1054px;top:921px;width:573px;height:22px;background:#efefef"></div><div style="left:1055px;top:922px;width:148px;height:20px;background:linear-gradient(#ffffff 0%,#f3f3f3 40%,#e2e2e2 60%,#d0d0d0 100%);border:1px solid #9c9c9c;border-radius:4px;box-shadow:inset 0 0 0 1px rgba(255,255,255,.6)"></div><svg class="a" style="left:1192px;top:930px" width="7" height="4" viewBox="0 0 7 4"><path d="M0 0h7L3.500 4z" fill="#111"/></svg><svg class="t" style="left:1073.00px;top:923.60px" width="46.4" height="16.8" ><text x="1.00" y="12.00" font-family="Liberation Serif" font-size="12.40" fill="#111">ByLayer</text></svg><div style="left:1211px;top:922px;width:158px;height:20px;background:linear-gradient(#ffffff 0%,#f3f3f3 40%,#e2e2e2 60%,#d0d0d0 100%);border:1px solid #9c9c9c;border-radius:4px;box-shadow:inset 0 0 0 1px rgba(255,255,255,.6)"></div><svg class="a" style="left:1358px;top:930px" width="7" height="4" viewBox="0 0 7 4"><path d="M0 0h7L3.500 4z" fill="#111"/></svg><svg class="t" style="left:1276.00px;top:923.60px" width="46.4" height="16.8" ><text x="1.00" y="12.00" font-family="Liberation Serif" font-size="12.40" fill="#111">ByLayer</text></svg><div style="left:1378px;top:922px;width:122px;height:20px;background:linear-gradient(#ffffff 0%,#f3f3f3 40%,#e2e2e2 60%,#d0d0d0 100%);border:1px solid #9c9c9c;border-radius:4px;box-shadow:inset 0 0 0 1px rgba(255,255,255,.6)"></div><svg class="a" style="left:1489px;top:930px" width="7" height="4" viewBox="0 0 7 4"><path d="M0 0h7L3.500 4z" fill="#111"/></svg><svg class="t" style="left:1421.00px;top:923.60px" width="46.4" height="16.8" ><text x="1.00" y="12.00" font-family="Liberation Serif" font-size="12.40" fill="#111">ByLayer</text></svg><div style="left:1508px;top:922px;width:118px;height:20px;background:#f6f6f6;border:1px solid #9c9c9c;border-radius:2px;box-shadow:inset 0 0 0 1px rgba(255,255,255,.6)"></div><svg class="a" style="left:1615px;top:930px" width="7" height="4" viewBox="0 0 7 4"><path d="M0 0h7L3.500 4z" fill="#a0a0a0"/></svg><svg class="t" style="left:1516.00px;top:923.60px" width="55.6" height="16.8" ><text x="1.00" y="12.00" font-family="Liberation Serif" font-size="11.00" fill="#7a7a7a">BYCOLOR</text></svg>
<div style="left:1203px;top:921px;width:8px;height:22px;background:#fbfbfb"></div>
<div style="left:1205px;top:922px;width:1px;height:20px;background:#222"></div>
<div style="left:1208px;top:922px;width:1px;height:20px;background:#222"></div>
<div style="left:1369px;top:921px;width:8px;height:22px;background:#fbfbfb"></div>
<div style="left:1371px;top:922px;width:1px;height:20px;background:#222"></div>
<div style="left:1374px;top:922px;width:1px;height:20px;background:#222"></div>
<div style="left:1500px;top:921px;width:8px;height:22px;background:#fbfbfb"></div>
<div style="left:1502px;top:922px;width:1px;height:20px;background:#222"></div>
<div style="left:1505px;top:922px;width:1px;height:20px;background:#222"></div>
<div style="left:746px;top:927px;width:10px;height:10px;background:#f00;border:1px solid #700"></div>
<svg class="ic" style="left:681px;top:924.5px" width="14" height="14" viewBox="0 0 16 16"><path d="M5 11C5 9.500 2.600 8 2.600 5.200 2.600 2.500 4.800 0.700 7.300 0.700S12 2.500 12 5.200C12 8 9.600 9.500 9.600 11z" fill="#fbeaa0" stroke="#3a3a3a" stroke-width="1.1" /><path d="M5.500 11V13.200C5.500 14.500 9.100 14.500 9.100 13.200V11" fill="#f4f4f4" stroke="#3a3a3a" stroke-width="1.1" /></svg>
<svg class="ic" style="left:695px;top:924.5px" width="14" height="14" viewBox="0 0 16 16"><circle cx="7" cy="7.300" r="4.200" fill="#fbeaa0" stroke="#3a3a3a" stroke-width="1.100"/><path d="M7 0.300V2 M7 12.600V14.300 M0 7.300H1.700 M12.300 7.300H14 M2 2.300L3.300 3.600 M10.700 11L12 12.300 M12 2.300L10.700 3.600 M3.300 11L2 12.300" fill="none" stroke="#3a3a3a" stroke-width="1.1" /></svg>
<svg class="ic" style="left:712px;top:924.5px" width="14" height="14" viewBox="0 0 16 16"><path d="M0.500 9.500V0.600H9.500V4 M2.800 7.500V3H7.500" fill="none" stroke="#a4a4a4" stroke-width="1.1" /><circle cx="9.500" cy="10" r="2.800" fill="#c4c4c4"/><path d="M9.500 5.800V14.200 M5.300 10H13.700 M6.500 7L12.500 13 M12.500 7L6.500 13" fill="none" stroke="#bcbcbc" stroke-width="1" /></svg>
<svg class="ic" style="left:730px;top:924.5px" width="14" height="14" viewBox="0 0 16 16"><path d="M8 6.500V3.800C8 0.200 13.500 0.200 13.500 3.800V5" fill="none" stroke="#1f5fa8" stroke-width="1.5" /><rect x="0.600" y="6.500" width="9.400" height="7.500" rx="1" fill="#bfe0f7" stroke="#1f5fa8" stroke-width="1.200"/><path d="M5.300 8.500V12" fill="none" stroke="#123a6a" stroke-width="1.4" /></svg>
<div style="left:1060px;top:927px;width:10px;height:10px;background:#f00;border:1px solid #700"></div>
<div style="left:1215px;top:932px;width:60px;height:1px;background:#111"></div>
<div style="left:1381px;top:932px;width:35px;height:1px;background:#111"></div>
<div style="left:0px;top:951px;width:16px;height:2px;background:#8c8c8c"></div>
<div style="left:16px;top:951px;width:1905px;height:2px;background:#f4f4f4"></div>
<div style="left:21px;top:951px;width:2px;height:2px;background:#3a3a3a"></div>
<div style="left:24px;top:951px;width:1px;height:2px;background:#3a3a3a"></div>
<div style="left:41px;top:951px;width:2px;height:2px;background:#3a3a3a"></div>
<div style="left:125px;top:951px;width:1px;height:2px;background:#3a3a3a"></div>
<div style="left:128px;top:951px;width:2px;height:2px;background:#3a3a3a"></div>
<div style="left:133px;top:951px;width:6px;height:2px;background:#3a3a3a"></div>
<div style="left:140px;top:951px;width:2px;height:2px;background:#3a3a3a"></div>
<div style="left:183px;top:951px;width:2px;height:2px;background:#3a3a3a"></div>
<div style="left:0px;top:945px;width:1921px;height:5px;background:linear-gradient(#6b6b6b,#5c5c5c)"></div>
<svg class="a" style="left:0;top:0;z-index:6" width="41" height="41" viewBox="0 0 41 41"><defs><linearGradient id="alg" x1="0" y1="0" x2="0" y2="1"><stop offset="0" stop-color="#f5a0a0"/><stop offset="0.32" stop-color="#f07070"/><stop offset="0.42" stop-color="#ea2630"/><stop offset="1" stop-color="#e01c28"/></linearGradient><filter id="alb"><feGaussianBlur stdDeviation="0.5"/></filter></defs><path d="M8 31.500L30 28" stroke="#6a6a6a" stroke-width="3" opacity="0.35" filter="url(#alb)"/><g filter="url(#alb)"><path d="M12 3.800L15.800 4.600 27.500 27 22 29.300 19.300 24.200 11.500 26.800 9.800 32 5.300 32.800 8.800 13z" fill="url(#alg)"/><path d="M15.800 4.600L27.500 27 25.200 28 13.800 6z" fill="#c8161f" opacity="0.75"/><path d="M14.200 13.500L18.300 21 12.200 23z" fill="#8e0f16"/><path d="M5.300 32.800L9.800 32 11.500 26.800 8 27.500z" fill="#b8121c"/></g><path d="M30.200 18h6.800l-3.400 4.700z" fill="#262626"/></svg>
<svg class="a" style="left:41px;top:0" width="395" height="24" viewBox="41 0 395 24"><defs><linearGradient id="qg" x1="0" y1="0" x2="1" y2="1"><stop offset="0" stop-color="#fff"/><stop offset="1" stop-color="#c9ced6"/></linearGradient></defs><path d="M50.600 7h10.700l4.200 4v7.500h-14.900z" fill="url(#qg)" stroke="#2e3238" stroke-width="1.200" stroke-linejoin="round"/><path d="M61.300 7v4h4.200" fill="#e8eaee" stroke="#2e3238" stroke-width="1"/><path d="M74.600 16.500V7.200h4.500l1.200 1.500h6v2.300" fill="#e4e7ec" stroke="#2e3238" stroke-width="1.200" stroke-linejoin="round"/><path d="M74.600 17l3.200-6h12l-3.400 6z" fill="#c4cad4" stroke="#2e3238" stroke-width="1.200" stroke-linejoin="round"/><rect x="99.300" y="4.300" width="13.400" height="13" rx="1" fill="#5a6070" stroke="#2e3238" stroke-width="1"/><rect x="101.600" y="5.100" width="8.800" height="5.200" fill="#eef0f3"/><rect x="102.500" y="12.600" width="7" height="4" fill="#f4f5f7"/><rect x="103.800" y="13.300" width="1.600" height="2.600" fill="#3a3f4a"/><rect x="122.300" y="4.300" width="13.400" height="13" rx="1" fill="#5a6070" stroke="#2e3238" stroke-width="1"/><rect x="124.600" y="5.100" width="8.800" height="5.200" fill="#eef0f3"/><rect x="125.500" y="12.600" width="7" height="4" fill="#f4f5f7"/><rect x="126.800" y="13.300" width="1.600" height="2.600" fill="#3a3f4a"/><path d="M130.500 17.500l1-3 5.500-5.500 2.200 2.200-5.500 5.500z" fill="#f0b840" stroke="#8a5a10" stroke-width="0.800"/><path d="M130.500 17.500l1-3 2 2z" fill="#f6e0b0"/><rect x="149.500" y="4.500" width="9" height="4.500" fill="#fff" stroke="#2e3238" stroke-width="1.100"/><path d="M147 9.500c0-1 0.800-1.500 1.500-1.500h11c1 0 1.500 0.700 1.500 1.500v5.500h-14z" fill="#eceef2" stroke="#2e3238" stroke-width="1.200"/><rect x="149.500" y="13" width="9" height="5" fill="#fff" stroke="#2e3238" stroke-width="1.100"/><path d="M151 15.500h6" stroke="#99a" stroke-width="0.800"/><path d="M170.600 10.500l6-4.800v3h3.500c3.200 0 4.900 2 4.900 4.500v3.300h-3.200v-2.800c0-1.300-0.800-2-2-2h-3.200v3.200z" fill="#fff" stroke="#2e3238" stroke-width="1.100" stroke-linejoin="round"/><path d="M193.300 10.300h4.400l-2.200 2.700z M229.300 10.300h4.400l-2.200 2.700z" fill="#3c3c3c" opacity="0.800"/><path d="M221.400 10.500l-6-4.800v3h-3.500c-3.200 0-4.900 2-4.900 4.500v3.300h3.200v-2.800c0-1.300 0.800-2 2-2h3.200v3.200z" fill="#b9b9b9" stroke="#8a8a8a" stroke-width="1.100" stroke-linejoin="round"/><path d="M422 8h8v1.600h-8z M422.300 10.800h7.400l-3.700 3.800z" fill="#111"/></svg>
<div style="left:238.500px;top:1.500px;width:179px;height:21px;background:linear-gradient(#f9f9f9 0%,#eaeaea 45%,#d6d6d6 55%,#c6c6c6 100%);border:1px solid #6e6e6e;border-radius:2px;box-shadow:inset 0 0 0 1px rgba(255,255,255,.5)"></div>
<svg class="ic" style="left:242px;top:4px" width="16" height="16" viewBox="0 0 16 16"><path d="M13.29 6.17 L15.45 6.52 L15.45 9.48 L13.29 9.83 L13.04 10.44 L14.32 12.22 L12.22 14.32 L10.44 13.04 L9.83 13.29 L9.48 15.45 L6.52 15.45 L6.17 13.29 L5.56 13.04 L3.78 14.32 L1.68 12.22 L2.96 10.44 L2.71 9.83 L0.55 9.48 L0.55 6.52 L2.71 6.17 L2.96 5.56 L1.68 3.78 L3.78 1.68 L5.56 2.96 L6.17 2.71 L6.52 0.55 L9.48 0.55 L9.83 2.71 L10.44 2.96 L12.22 1.68 L14.32 3.78 L13.04 5.56Z" fill="#fdfdfd" stroke="#444" stroke-width="0.95" stroke-linejoin="round"/><circle cx="8" cy="8" r="2.600" fill="#efefef" stroke="#444" stroke-width="0.95"/></svg>
<svg class="t" style="left:259.00px;top:5.40px" width="63.0" height="16.8" ><text class="cs" x="1.00" y="12.00" font-size="12.00" fill="#111">草图与注释</text></svg><span class="h" style="left:260.0px;top:5.4px;width:60.0px;font-size:12.0px">草图与注释</span>
<svg class="a" style="left:408px;top:10px" width="8" height="5"><path d="M0 0h7.600L3.800 4.200z" fill="#777"/></svg>
<svg class="a" style="left:17px;top:101px" width="22" height="22" viewBox="17 101 22 22"><defs><radialGradient id="jb" cx="38%" cy="42%" r="65%"><stop offset="0" stop-color="#fff"/><stop offset="0.7" stop-color="#f6e6e6"/><stop offset="1" stop-color="#d8b8b8"/></radialGradient><linearGradient id="jj" x1="0" y1="0" x2="0" y2="1"><stop offset="0" stop-color="#7a2a08"/><stop offset="0.12" stop-color="#f08020"/><stop offset="0.45" stop-color="#f8a030"/><stop offset="0.75" stop-color="#e83828"/><stop offset="1" stop-color="#a00c14"/></linearGradient><filter id="jf"><feGaussianBlur stdDeviation="0.45"/></filter></defs><circle cx="27.500" cy="111.800" r="8.700" fill="url(#jb)"/><path d="M27 103.800H32.400V113.500C32.400 116.600 30.400 117.800 27.800 117.800H25V115.200H27.200C28.200 115.200 28.500 114.700 28.500 113.800V106.200H27z" fill="url(#jj)" filter="url(#jf)"/></svg>
</div>
</body></html>
